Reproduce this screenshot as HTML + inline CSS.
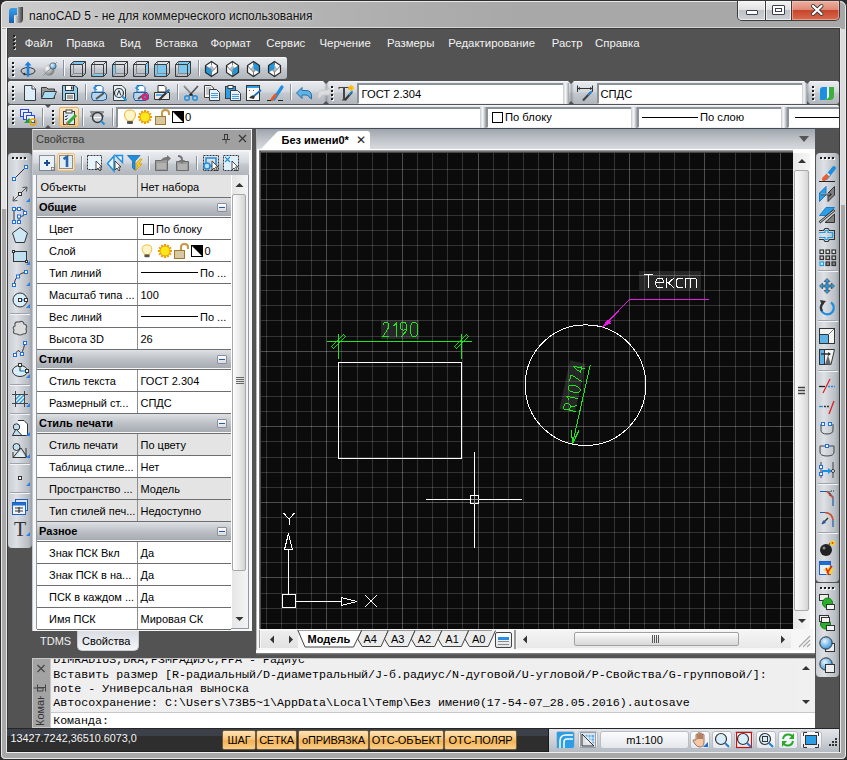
<!DOCTYPE html><html><head><meta charset="utf-8"><style>
html,body{margin:0;padding:0;width:847px;height:760px;overflow:hidden;background:#2a2a2a}
*{box-sizing:border-box}
</style></head><body>
<div style="position:absolute;left:0px;top:0px;width:847px;height:760px;background:#a8a8a8;border:1px solid #2e2e2e;border-radius:7px 7px 5px 5px"></div>
<div style="position:absolute;left:1px;top:1px;width:845px;height:758px;border:1px solid rgba(255,255,255,0.75);border-radius:6px 6px 4px 4px"></div>
<div style="position:absolute;left:2px;top:2px;width:843px;height:26px;background:linear-gradient(90deg,rgba(255,255,255,0.42) 0px,rgba(255,255,255,0.25) 150px,rgba(255,255,255,0.08) 380px,rgba(255,255,255,0) 520px)"></div>
<div style="position:absolute;left:2px;top:27px;width:838px;height:1px;background:rgba(255,255,255,0.5)"></div>
<div style="position:absolute;left:2px;top:29px;width:5px;height:180px;background:#e2e2e2"></div>
<div style="position:absolute;left:841px;top:29px;width:4px;height:176px;background:#dcdcdc"></div>
<div style="position:absolute;left:6px;top:28px;width:1px;height:725px;background:rgba(255,255,255,0.7)"></div>
<div style="position:absolute;left:840px;top:28px;width:1px;height:725px;background:rgba(255,255,255,0.7)"></div>
<div style="position:absolute;left:7px;top:752px;width:833px;height:1px;background:rgba(255,255,255,0.8)"></div>
<svg style="position:absolute;left:8px;top:6px" width="16" height="18"><defs><linearGradient id="tlb" x1="0" y1="0" x2="0" y2="1"><stop offset="0" stop-color="#3aa0e8"/><stop offset="1" stop-color="#1a5fb0"/></linearGradient><linearGradient id="tlg" x1="0" y1="0" x2="1" y2="0"><stop offset="0" stop-color="#f0f0f0"/><stop offset="1" stop-color="#3a3a3a"/></linearGradient></defs><path d="M1,5 Q1,2 4,2 H9 V9 H6 V17 H1 Z" fill="url(#tlb)"/><path d="M10,1 H15 V13 Q15,17 11,17 H6 V10 H10 Z" fill="url(#tlg)"/></svg>
<div style="position:absolute;left:29px;top:10px;font-family:'Liberation Sans',sans-serif;font-size:12px;color:#111;font-weight:normal;white-space:nowrap;line-height:1;text-shadow:0 0 6px rgba(255,255,255,0.55),0 0 3px rgba(255,255,255,0.4)">nanoCAD 5 - не для коммерческого использования</div>
<div style="position:absolute;left:737px;top:0px;width:103px;height:21px;background:#3c3c3c;border-radius:0 0 5px 5px"></div>
<div style="position:absolute;left:738px;top:1px;width:27px;height:19px;background:linear-gradient(180deg,#f4f4f4 0%,#e2e2e2 45%,#bfc3c8 50%,#cdd1d5 100%);border-radius:0 0 0 4px;box-shadow:inset 0 0 0 1px rgba(255,255,255,0.6)"></div>
<div style="position:absolute;left:766px;top:1px;width:25px;height:19px;background:linear-gradient(180deg,#f4f4f4 0%,#e2e2e2 45%,#bfc3c8 50%,#cdd1d5 100%);box-shadow:inset 0 0 0 1px rgba(255,255,255,0.6)"></div>
<div style="position:absolute;left:792px;top:1px;width:47px;height:19px;background:linear-gradient(180deg,#eeb0a0 0%,#de8c78 45%,#c8452c 50%,#d86a50 100%);border-radius:0 0 4px 0;box-shadow:inset 0 0 0 1px rgba(255,210,200,0.5)"></div>
<div style="position:absolute;left:746px;top:10px;width:12px;height:5px;background:#fff;border:1px solid #3a4050;border-radius:1px"></div>
<div style="position:absolute;left:772px;top:5px;width:13px;height:10px;background:#fff;border:1px solid #3a4050;border-radius:1px"></div>
<div style="position:absolute;left:775px;top:8px;width:7px;height:4px;background:#fff;border:1px solid #3a4050"></div>
<svg style="position:absolute;left:809px;top:3px" width="17" height="14"><path d="M4,3 L12.5,11 M12.5,3 L4,11" stroke="#3a3a3a" stroke-width="4" stroke-linecap="round"/><path d="M4,3 L12.5,11 M12.5,3 L4,11" stroke="#fff" stroke-width="2.3" stroke-linecap="round"/></svg>
<div style="position:absolute;left:7px;top:29px;width:832px;height:723px;background:#535353"></div>
<div style="position:absolute;left:7px;top:28px;width:833px;height:1px;background:#3a3a3a"></div>
<div style="position:absolute;left:7px;top:29px;width:1px;height:723px;background:#3a3a3a"></div>
<div style="position:absolute;left:839px;top:29px;width:1px;height:723px;background:#3a3a3a"></div>
<div style="position:absolute;left:14px;top:36px;width:2px;height:2px;background:#cfcfcf"></div><div style="position:absolute;left:13px;top:35px;width:2px;height:2px;background:#202020"></div><div style="position:absolute;left:14px;top:40px;width:2px;height:2px;background:#cfcfcf"></div><div style="position:absolute;left:13px;top:39px;width:2px;height:2px;background:#202020"></div><div style="position:absolute;left:14px;top:44px;width:2px;height:2px;background:#cfcfcf"></div><div style="position:absolute;left:13px;top:43px;width:2px;height:2px;background:#202020"></div><div style="position:absolute;left:14px;top:48px;width:2px;height:2px;background:#cfcfcf"></div><div style="position:absolute;left:13px;top:47px;width:2px;height:2px;background:#202020"></div>
<div style="position:absolute;left:24.7px;top:38px;font-family:'Liberation Sans',sans-serif;font-size:11.4px;color:#f2f2f2;font-weight:normal;white-space:nowrap;line-height:1;">Файл</div>
<div style="position:absolute;left:66.2px;top:38px;font-family:'Liberation Sans',sans-serif;font-size:11.4px;color:#f2f2f2;font-weight:normal;white-space:nowrap;line-height:1;">Правка</div>
<div style="position:absolute;left:120px;top:38px;font-family:'Liberation Sans',sans-serif;font-size:11.4px;color:#f2f2f2;font-weight:normal;white-space:nowrap;line-height:1;">Вид</div>
<div style="position:absolute;left:155.3px;top:38px;font-family:'Liberation Sans',sans-serif;font-size:11.4px;color:#f2f2f2;font-weight:normal;white-space:nowrap;line-height:1;">Вставка</div>
<div style="position:absolute;left:210.4px;top:38px;font-family:'Liberation Sans',sans-serif;font-size:11.4px;color:#f2f2f2;font-weight:normal;white-space:nowrap;line-height:1;">Формат</div>
<div style="position:absolute;left:266.2px;top:38px;font-family:'Liberation Sans',sans-serif;font-size:11.4px;color:#f2f2f2;font-weight:normal;white-space:nowrap;line-height:1;">Сервис</div>
<div style="position:absolute;left:319.5px;top:38px;font-family:'Liberation Sans',sans-serif;font-size:11.4px;color:#f2f2f2;font-weight:normal;white-space:nowrap;line-height:1;">Черчение</div>
<div style="position:absolute;left:387px;top:38px;font-family:'Liberation Sans',sans-serif;font-size:11.4px;color:#f2f2f2;font-weight:normal;white-space:nowrap;line-height:1;">Размеры</div>
<div style="position:absolute;left:448.3px;top:38px;font-family:'Liberation Sans',sans-serif;font-size:11.4px;color:#f2f2f2;font-weight:normal;white-space:nowrap;line-height:1;">Редактирование</div>
<div style="position:absolute;left:551.7px;top:38px;font-family:'Liberation Sans',sans-serif;font-size:11.4px;color:#f2f2f2;font-weight:normal;white-space:nowrap;line-height:1;">Растр</div>
<div style="position:absolute;left:595px;top:38px;font-family:'Liberation Sans',sans-serif;font-size:11.4px;color:#f2f2f2;font-weight:normal;white-space:nowrap;line-height:1;">Справка</div>
<div style="position:absolute;left:8px;top:57px;width:279px;height:22px;background:linear-gradient(180deg,#e9ecf0 0%,#d5d9de 45%,#c3c8ce 55%,#b1b6bd 100%);border-radius:3px;box-shadow:inset 0 1px 0 #f4f6f8"></div>
<div style="position:absolute;left:63px;top:60px;width:1px;height:16px;background:#8a9099"></div><div style="position:absolute;left:64px;top:60px;width:1px;height:16px;background:#fafafa"></div>
<div style="position:absolute;left:198px;top:60px;width:1px;height:16px;background:#8a9099"></div><div style="position:absolute;left:199px;top:60px;width:1px;height:16px;background:#fafafa"></div>
<div style="position:absolute;left:8px;top:81px;width:831px;height:23px;background:linear-gradient(180deg,#e9ecf0 0%,#d5d9de 45%,#c3c8ce 55%,#b1b6bd 100%);border-radius:3px;box-shadow:inset 0 1px 0 #f4f6f8"></div>
<div style="position:absolute;left:85px;top:84px;width:1px;height:16px;background:#8a9099"></div><div style="position:absolute;left:86px;top:84px;width:1px;height:16px;background:#fafafa"></div>
<div style="position:absolute;left:177px;top:84px;width:1px;height:16px;background:#8a9099"></div><div style="position:absolute;left:178px;top:84px;width:1px;height:16px;background:#fafafa"></div>
<div style="position:absolute;left:290px;top:84px;width:1px;height:16px;background:#8a9099"></div><div style="position:absolute;left:291px;top:84px;width:1px;height:16px;background:#fafafa"></div>
<div style="position:absolute;left:324px;top:81px;width:5px;height:23px;background:linear-gradient(90deg,rgba(0,0,0,0.0),rgba(90,96,104,0.35) 50%,rgba(255,255,255,0.0))"></div>
<svg style="position:absolute;left:323px;top:81px" width="6" height="23"><path d="M0,0 H6 L3,3 Z M0,23 H6 L3,20 Z" fill="#535353"/></svg>
<div style="position:absolute;left:569px;top:81px;width:5px;height:23px;background:linear-gradient(90deg,rgba(0,0,0,0.0),rgba(90,96,104,0.35) 50%,rgba(255,255,255,0.0))"></div>
<svg style="position:absolute;left:568px;top:81px" width="6" height="23"><path d="M0,0 H6 L3,3 Z M0,23 H6 L3,20 Z" fill="#535353"/></svg>
<div style="position:absolute;left:805px;top:81px;width:5px;height:23px;background:linear-gradient(90deg,rgba(0,0,0,0.0),rgba(90,96,104,0.35) 50%,rgba(255,255,255,0.0))"></div>
<svg style="position:absolute;left:804px;top:81px" width="6" height="23"><path d="M0,0 H6 L3,3 Z M0,23 H6 L3,20 Z" fill="#535353"/></svg>
<div style="position:absolute;left:357px;top:83px;width:206px;height:21px;background:#fff;border-top:2px solid #8d9298;border-left:2px solid #8d9298;border-bottom:1px solid #f2f2f2"></div>
<div style="position:absolute;left:563px;top:83px;width:6px;height:21px;background:linear-gradient(90deg,#c4c8ce,#f7f7f7 40%,#dfe2e6 60%,#9aa0a8)"></div>
<div style="position:absolute;left:361.5px;top:89px;font-family:'Liberation Sans',sans-serif;font-size:11.2px;color:#000;font-weight:normal;white-space:nowrap;line-height:1;">ГОСТ 2.304</div>
<div style="position:absolute;left:597px;top:83px;width:206px;height:21px;background:#fff;border-top:2px solid #8d9298;border-left:2px solid #8d9298;border-bottom:1px solid #f2f2f2"></div>
<div style="position:absolute;left:802px;top:83px;width:5px;height:21px;background:linear-gradient(90deg,#c4c8ce,#f7f7f7 40%,#dfe2e6 60%,#9aa0a8)"></div>
<div style="position:absolute;left:600.5px;top:89px;font-family:'Liberation Sans',sans-serif;font-size:11.2px;color:#000;font-weight:normal;white-space:nowrap;line-height:1;">СПДС</div>
<div style="position:absolute;left:8px;top:105px;width:831px;height:24px;background:linear-gradient(180deg,#e9ecf0 0%,#d5d9de 45%,#c3c8ce 55%,#b1b6bd 100%);border-radius:3px;box-shadow:inset 0 1px 0 #f4f6f8"></div>
<div style="position:absolute;left:8px;top:128px;width:831px;height:1px;background:#464c56"></div>
<svg style="position:absolute;left:45px;top:105px" width="6" height="23"><path d="M0,0 H6 L3,3 Z M0,23 H6 L3,20 Z" fill="#535353"/></svg>
<div style="position:absolute;left:112px;top:108px;width:1px;height:18px;background:#8a9099"></div><div style="position:absolute;left:113px;top:108px;width:1px;height:18px;background:#fafafa"></div>
<div style="position:absolute;left:116px;top:107px;width:364px;height:21px;background:#fff;border-top:2px solid #8d9298;border-left:2px solid #8d9298;border-bottom:1px solid #f2f2f2"></div>
<div style="position:absolute;left:480px;top:107px;width:6px;height:21px;background:linear-gradient(90deg,#c4c8ce,#f7f7f7 40%,#dfe2e6 60%,#9aa0a8)"></div>
<div style="position:absolute;left:486px;top:107px;width:145px;height:21px;background:#fff;border-top:2px solid #8d9298;border-left:2px solid #8d9298;border-bottom:1px solid #f2f2f2"></div>
<div style="position:absolute;left:631px;top:107px;width:6px;height:21px;background:linear-gradient(90deg,#c4c8ce,#f7f7f7 40%,#dfe2e6 60%,#9aa0a8)"></div>
<div style="position:absolute;left:637px;top:107px;width:144px;height:21px;background:#fff;border-top:2px solid #8d9298;border-left:2px solid #8d9298;border-bottom:1px solid #f2f2f2"></div>
<div style="position:absolute;left:781px;top:107px;width:6px;height:21px;background:linear-gradient(90deg,#c4c8ce,#f7f7f7 40%,#dfe2e6 60%,#9aa0a8)"></div>
<div style="position:absolute;left:787px;top:107px;width:52px;height:21px;background:#fff;border-top:2px solid #8d9298;border-left:2px solid #8d9298;border-bottom:1px solid #f2f2f2"></div>
<div style="position:absolute;left:185px;top:112px;font-family:'Liberation Sans',sans-serif;font-size:11.2px;color:#000;font-weight:normal;white-space:nowrap;line-height:1;">0</div>
<div style="position:absolute;left:492px;top:112px;width:11px;height:11px;border:1px solid #000"></div>
<div style="position:absolute;left:505px;top:112px;font-family:'Liberation Sans',sans-serif;font-size:11.2px;color:#000;font-weight:normal;white-space:nowrap;line-height:1;">По блоку</div>
<div style="position:absolute;left:642px;top:117px;width:56px;height:1px;background:#000"></div>
<div style="position:absolute;left:700px;top:112px;font-family:'Liberation Sans',sans-serif;font-size:11.2px;color:#000;font-weight:normal;white-space:nowrap;line-height:1;">По слою</div>
<div style="position:absolute;left:795px;top:117px;width:44px;height:1px;background:#000"></div>
<div style="position:absolute;left:32px;top:129px;width:220px;height:502px;background:#f8f8f8;border-left:1px solid #c4c8ce"></div>
<div style="position:absolute;left:33px;top:130px;width:218px;height:20px;background:#9fa09f"></div>
<div style="position:absolute;left:36px;top:134px;font-family:'Liberation Sans',sans-serif;font-size:11px;color:#3a3a3a;font-weight:normal;white-space:nowrap;line-height:1;">Свойства</div>
<svg style="position:absolute;left:221px;top:134px" width="26" height="10"><path d="M3.5,0.5 V5.5 M6.5,0.5 V5.5 M1,5.5 H9 M5,5.5 V9.5 M3,0.5 H7" stroke="#3a3a3a" fill="none"/><path d="M18,1 L25,8 M25,1 L18,8" stroke="#3a3a3a" stroke-width="1.3"/></svg>
<div style="position:absolute;left:33px;top:150px;width:218px;height:2px;background:#f4f4f4"></div>
<div style="position:absolute;left:33px;top:152px;width:216px;height:23px;background:linear-gradient(180deg,#e9ecf0 0%,#d5d9de 45%,#c3c8ce 55%,#b1b6bd 100%)"></div>
<div style="position:absolute;left:36px;top:175px;width:213px;height:454px;background:#fff;border:1px solid #8e98a6;border-top:none"></div>
<div style="position:absolute;left:37px;top:175px;width:194px;height:22px;background:#e4e4e4"></div>
<div style="position:absolute;left:137px;top:175px;width:1px;height:22px;background:#8e8e8e"></div>
<div style="position:absolute;left:37px;top:197px;width:194px;height:1px;background:#6e6e6e"></div>
<div style="position:absolute;left:40.5px;top:181.5px;font-family:'Liberation Sans',sans-serif;font-size:11px;color:#000;font-weight:normal;white-space:nowrap;line-height:1;">Объекты</div>
<div style="position:absolute;left:140.5px;top:181.5px;font-family:'Liberation Sans',sans-serif;font-size:11px;color:#000;font-weight:normal;white-space:nowrap;line-height:1;">Нет набора</div>
<div style="position:absolute;left:37px;top:198px;width:194px;height:18px;background:linear-gradient(180deg,#dde0e4,#b9bdc3 60%,#a6abb2)"></div>
<div style="position:absolute;left:37px;top:216px;width:194px;height:1px;background:#f8f8f8"></div>
<div style="position:absolute;left:37px;top:217px;width:194px;height:1px;background:#6e6e6e"></div>
<div style="position:absolute;left:39px;top:202px;font-family:'Liberation Sans',sans-serif;font-size:11px;color:#000;font-weight:bold;white-space:nowrap;line-height:1;">Общие</div>
<div style="position:absolute;left:217px;top:203px;width:10px;height:9px;background:linear-gradient(#fdfdfd,#d8dade);border:1px solid #8c9198;border-radius:1px"></div>
<div style="position:absolute;left:219px;top:207px;width:6px;height:1px;background:#2a5aa8"></div>
<div style="position:absolute;left:37px;top:218px;width:194px;height:21px;background:#ffffff"></div>
<div style="position:absolute;left:137px;top:218px;width:1px;height:21px;background:#8e8e8e"></div>
<div style="position:absolute;left:37px;top:239px;width:194px;height:1px;background:#6e6e6e"></div>
<div style="position:absolute;left:49px;top:223.5px;font-family:'Liberation Sans',sans-serif;font-size:11px;color:#000;font-weight:normal;white-space:nowrap;line-height:1;">Цвет</div>
<div style="position:absolute;left:37px;top:240px;width:194px;height:21px;background:#ffffff"></div>
<div style="position:absolute;left:137px;top:240px;width:1px;height:21px;background:#8e8e8e"></div>
<div style="position:absolute;left:37px;top:261px;width:194px;height:1px;background:#6e6e6e"></div>
<div style="position:absolute;left:49px;top:245.5px;font-family:'Liberation Sans',sans-serif;font-size:11px;color:#000;font-weight:normal;white-space:nowrap;line-height:1;">Слой</div>
<div style="position:absolute;left:37px;top:262px;width:194px;height:21px;background:#ffffff"></div>
<div style="position:absolute;left:137px;top:262px;width:1px;height:21px;background:#8e8e8e"></div>
<div style="position:absolute;left:37px;top:283px;width:194px;height:1px;background:#6e6e6e"></div>
<div style="position:absolute;left:49px;top:267.5px;font-family:'Liberation Sans',sans-serif;font-size:11px;color:#000;font-weight:normal;white-space:nowrap;line-height:1;">Тип линий</div>
<div style="position:absolute;left:37px;top:284px;width:194px;height:21px;background:#ffffff"></div>
<div style="position:absolute;left:137px;top:284px;width:1px;height:21px;background:#8e8e8e"></div>
<div style="position:absolute;left:37px;top:305px;width:194px;height:1px;background:#6e6e6e"></div>
<div style="position:absolute;left:49px;top:289.5px;font-family:'Liberation Sans',sans-serif;font-size:11px;color:#000;font-weight:normal;white-space:nowrap;line-height:1;">Масштаб типа ...</div>
<div style="position:absolute;left:140.5px;top:289.5px;font-family:'Liberation Sans',sans-serif;font-size:11px;color:#000;font-weight:normal;white-space:nowrap;line-height:1;">100</div>
<div style="position:absolute;left:37px;top:306px;width:194px;height:21px;background:#ffffff"></div>
<div style="position:absolute;left:137px;top:306px;width:1px;height:21px;background:#8e8e8e"></div>
<div style="position:absolute;left:37px;top:327px;width:194px;height:1px;background:#6e6e6e"></div>
<div style="position:absolute;left:49px;top:311.5px;font-family:'Liberation Sans',sans-serif;font-size:11px;color:#000;font-weight:normal;white-space:nowrap;line-height:1;">Вес линий</div>
<div style="position:absolute;left:37px;top:328px;width:194px;height:21px;background:#ffffff"></div>
<div style="position:absolute;left:137px;top:328px;width:1px;height:21px;background:#8e8e8e"></div>
<div style="position:absolute;left:37px;top:349px;width:194px;height:1px;background:#6e6e6e"></div>
<div style="position:absolute;left:49px;top:333.5px;font-family:'Liberation Sans',sans-serif;font-size:11px;color:#000;font-weight:normal;white-space:nowrap;line-height:1;">Высота 3D</div>
<div style="position:absolute;left:140.5px;top:333.5px;font-family:'Liberation Sans',sans-serif;font-size:11px;color:#000;font-weight:normal;white-space:nowrap;line-height:1;">26</div>
<div style="position:absolute;left:37px;top:350px;width:194px;height:18px;background:linear-gradient(180deg,#dde0e4,#b9bdc3 60%,#a6abb2)"></div>
<div style="position:absolute;left:37px;top:368px;width:194px;height:1px;background:#f8f8f8"></div>
<div style="position:absolute;left:37px;top:369px;width:194px;height:1px;background:#6e6e6e"></div>
<div style="position:absolute;left:39px;top:354px;font-family:'Liberation Sans',sans-serif;font-size:11px;color:#000;font-weight:bold;white-space:nowrap;line-height:1;">Стили</div>
<div style="position:absolute;left:217px;top:355px;width:10px;height:9px;background:linear-gradient(#fdfdfd,#d8dade);border:1px solid #8c9198;border-radius:1px"></div>
<div style="position:absolute;left:219px;top:359px;width:6px;height:1px;background:#2a5aa8"></div>
<div style="position:absolute;left:37px;top:370px;width:194px;height:21px;background:#ffffff"></div>
<div style="position:absolute;left:137px;top:370px;width:1px;height:21px;background:#8e8e8e"></div>
<div style="position:absolute;left:37px;top:391px;width:194px;height:1px;background:#6e6e6e"></div>
<div style="position:absolute;left:49px;top:375.5px;font-family:'Liberation Sans',sans-serif;font-size:11px;color:#000;font-weight:normal;white-space:nowrap;line-height:1;">Стиль текста</div>
<div style="position:absolute;left:140.5px;top:375.5px;font-family:'Liberation Sans',sans-serif;font-size:11px;color:#000;font-weight:normal;white-space:nowrap;line-height:1;">ГОСТ 2.304</div>
<div style="position:absolute;left:37px;top:392px;width:194px;height:21px;background:#ffffff"></div>
<div style="position:absolute;left:137px;top:392px;width:1px;height:21px;background:#8e8e8e"></div>
<div style="position:absolute;left:37px;top:413px;width:194px;height:1px;background:#6e6e6e"></div>
<div style="position:absolute;left:49px;top:397.5px;font-family:'Liberation Sans',sans-serif;font-size:11px;color:#000;font-weight:normal;white-space:nowrap;line-height:1;">Размерный ст...</div>
<div style="position:absolute;left:140.5px;top:397.5px;font-family:'Liberation Sans',sans-serif;font-size:11px;color:#000;font-weight:normal;white-space:nowrap;line-height:1;">СПДС</div>
<div style="position:absolute;left:37px;top:414px;width:194px;height:18px;background:linear-gradient(180deg,#dde0e4,#b9bdc3 60%,#a6abb2)"></div>
<div style="position:absolute;left:37px;top:432px;width:194px;height:1px;background:#f8f8f8"></div>
<div style="position:absolute;left:37px;top:433px;width:194px;height:1px;background:#6e6e6e"></div>
<div style="position:absolute;left:39px;top:418px;font-family:'Liberation Sans',sans-serif;font-size:11px;color:#000;font-weight:bold;white-space:nowrap;line-height:1;">Стиль печати</div>
<div style="position:absolute;left:217px;top:419px;width:10px;height:9px;background:linear-gradient(#fdfdfd,#d8dade);border:1px solid #8c9198;border-radius:1px"></div>
<div style="position:absolute;left:219px;top:423px;width:6px;height:1px;background:#2a5aa8"></div>
<div style="position:absolute;left:37px;top:434px;width:194px;height:21px;background:#e4e4e4"></div>
<div style="position:absolute;left:137px;top:434px;width:1px;height:21px;background:#8e8e8e"></div>
<div style="position:absolute;left:37px;top:455px;width:194px;height:1px;background:#6e6e6e"></div>
<div style="position:absolute;left:49px;top:439.5px;font-family:'Liberation Sans',sans-serif;font-size:11px;color:#000;font-weight:normal;white-space:nowrap;line-height:1;">Стиль печати</div>
<div style="position:absolute;left:140.5px;top:439.5px;font-family:'Liberation Sans',sans-serif;font-size:11px;color:#000;font-weight:normal;white-space:nowrap;line-height:1;">По цвету</div>
<div style="position:absolute;left:37px;top:456px;width:194px;height:21px;background:#ffffff"></div>
<div style="position:absolute;left:137px;top:456px;width:1px;height:21px;background:#8e8e8e"></div>
<div style="position:absolute;left:37px;top:477px;width:194px;height:1px;background:#6e6e6e"></div>
<div style="position:absolute;left:49px;top:461.5px;font-family:'Liberation Sans',sans-serif;font-size:11px;color:#000;font-weight:normal;white-space:nowrap;line-height:1;">Таблица стиле...</div>
<div style="position:absolute;left:140.5px;top:461.5px;font-family:'Liberation Sans',sans-serif;font-size:11px;color:#000;font-weight:normal;white-space:nowrap;line-height:1;">Нет</div>
<div style="position:absolute;left:37px;top:478px;width:194px;height:21px;background:#e4e4e4"></div>
<div style="position:absolute;left:137px;top:478px;width:1px;height:21px;background:#8e8e8e"></div>
<div style="position:absolute;left:37px;top:499px;width:194px;height:1px;background:#6e6e6e"></div>
<div style="position:absolute;left:49px;top:483.5px;font-family:'Liberation Sans',sans-serif;font-size:11px;color:#000;font-weight:normal;white-space:nowrap;line-height:1;">Пространство ...</div>
<div style="position:absolute;left:140.5px;top:483.5px;font-family:'Liberation Sans',sans-serif;font-size:11px;color:#000;font-weight:normal;white-space:nowrap;line-height:1;">Модель</div>
<div style="position:absolute;left:37px;top:500px;width:194px;height:21px;background:#e4e4e4"></div>
<div style="position:absolute;left:137px;top:500px;width:1px;height:21px;background:#8e8e8e"></div>
<div style="position:absolute;left:37px;top:521px;width:194px;height:1px;background:#6e6e6e"></div>
<div style="position:absolute;left:49px;top:505.5px;font-family:'Liberation Sans',sans-serif;font-size:11px;color:#000;font-weight:normal;white-space:nowrap;line-height:1;">Тип стилей печ...</div>
<div style="position:absolute;left:140.5px;top:505.5px;font-family:'Liberation Sans',sans-serif;font-size:11px;color:#000;font-weight:normal;white-space:nowrap;line-height:1;">Недоступно</div>
<div style="position:absolute;left:37px;top:522px;width:194px;height:18px;background:linear-gradient(180deg,#dde0e4,#b9bdc3 60%,#a6abb2)"></div>
<div style="position:absolute;left:37px;top:540px;width:194px;height:1px;background:#f8f8f8"></div>
<div style="position:absolute;left:37px;top:541px;width:194px;height:1px;background:#6e6e6e"></div>
<div style="position:absolute;left:39px;top:526px;font-family:'Liberation Sans',sans-serif;font-size:11px;color:#000;font-weight:bold;white-space:nowrap;line-height:1;">Разное</div>
<div style="position:absolute;left:217px;top:527px;width:10px;height:9px;background:linear-gradient(#fdfdfd,#d8dade);border:1px solid #8c9198;border-radius:1px"></div>
<div style="position:absolute;left:219px;top:531px;width:6px;height:1px;background:#2a5aa8"></div>
<div style="position:absolute;left:37px;top:542px;width:194px;height:21px;background:#ffffff"></div>
<div style="position:absolute;left:137px;top:542px;width:1px;height:21px;background:#8e8e8e"></div>
<div style="position:absolute;left:37px;top:563px;width:194px;height:1px;background:#6e6e6e"></div>
<div style="position:absolute;left:49px;top:547.5px;font-family:'Liberation Sans',sans-serif;font-size:11px;color:#000;font-weight:normal;white-space:nowrap;line-height:1;">Знак ПСК Вкл</div>
<div style="position:absolute;left:140.5px;top:547.5px;font-family:'Liberation Sans',sans-serif;font-size:11px;color:#000;font-weight:normal;white-space:nowrap;line-height:1;">Да</div>
<div style="position:absolute;left:37px;top:564px;width:194px;height:21px;background:#ffffff"></div>
<div style="position:absolute;left:137px;top:564px;width:1px;height:21px;background:#8e8e8e"></div>
<div style="position:absolute;left:37px;top:585px;width:194px;height:1px;background:#6e6e6e"></div>
<div style="position:absolute;left:49px;top:569.5px;font-family:'Liberation Sans',sans-serif;font-size:11px;color:#000;font-weight:normal;white-space:nowrap;line-height:1;">Знак ПСК в на...</div>
<div style="position:absolute;left:140.5px;top:569.5px;font-family:'Liberation Sans',sans-serif;font-size:11px;color:#000;font-weight:normal;white-space:nowrap;line-height:1;">Да</div>
<div style="position:absolute;left:37px;top:586px;width:194px;height:21px;background:#ffffff"></div>
<div style="position:absolute;left:137px;top:586px;width:1px;height:21px;background:#8e8e8e"></div>
<div style="position:absolute;left:37px;top:607px;width:194px;height:1px;background:#6e6e6e"></div>
<div style="position:absolute;left:49px;top:591.5px;font-family:'Liberation Sans',sans-serif;font-size:11px;color:#000;font-weight:normal;white-space:nowrap;line-height:1;">ПСК в каждом ...</div>
<div style="position:absolute;left:140.5px;top:591.5px;font-family:'Liberation Sans',sans-serif;font-size:11px;color:#000;font-weight:normal;white-space:nowrap;line-height:1;">Да</div>
<div style="position:absolute;left:37px;top:608px;width:194px;height:21px;background:#ffffff"></div>
<div style="position:absolute;left:137px;top:608px;width:1px;height:21px;background:#8e8e8e"></div>
<div style="position:absolute;left:37px;top:629px;width:194px;height:1px;background:#6e6e6e"></div>
<div style="position:absolute;left:49px;top:613.5px;font-family:'Liberation Sans',sans-serif;font-size:11px;color:#000;font-weight:normal;white-space:nowrap;line-height:1;">Имя ПСК</div>
<div style="position:absolute;left:140.5px;top:613.5px;font-family:'Liberation Sans',sans-serif;font-size:11px;color:#000;font-weight:normal;white-space:nowrap;line-height:1;">Мировая СК</div>
<div style="position:absolute;left:143px;top:224px;width:11px;height:11px;border:1px solid #000;background:#fff"></div>
<div style="position:absolute;left:156px;top:223.5px;font-family:'Liberation Sans',sans-serif;font-size:11px;color:#000;font-weight:normal;white-space:nowrap;line-height:1;">По блоку</div>
<svg style="position:absolute;left:140px;top:243px;overflow:visible" width="14" height="16" viewBox="0 0 16 16"><path d="M8,1 Q13.5,1 13.5,6 Q13.5,9 11,11 V12 H5 V11 Q2.5,9 2.5,6 Q2.5,1 8,1 Z" fill="#fff6c8" stroke="#f0b030"/><rect x="5" y="12" width="6" height="3" rx="1" fill="#555"/></svg>
<svg style="position:absolute;left:157px;top:243px;overflow:visible" width="16" height="16" viewBox="0 0 16 16"><g stroke="#f09a00" stroke-width="2"><path d="M8,8 L15.00,8.00"/><path d="M8,8 L14.06,11.50"/><path d="M8,8 L11.50,14.06"/><path d="M8,8 L8.00,15.00"/><path d="M8,8 L4.50,14.06"/><path d="M8,8 L1.94,11.50"/><path d="M8,8 L1.00,8.00"/><path d="M8,8 L1.94,4.50"/><path d="M8,8 L4.50,1.94"/><path d="M8,8 L8.00,1.00"/><path d="M8,8 L11.50,1.94"/><path d="M8,8 L14.06,4.50"/></g><circle cx="8" cy="8" r="5" fill="#ffe81a" stroke="#f0a000"/></svg>
<svg style="position:absolute;left:174px;top:243px;overflow:visible" width="16" height="16" viewBox="0 0 16 16"><path d="M7,8 V4 Q7,1 10.5,1 Q14,1 14,4 V6" fill="none" stroke="#c89a40" stroke-width="2"/><rect x="0.5" y="7.5" width="10" height="8" fill="#d8c8a0" stroke="#a07830"/></svg>
<svg style="position:absolute;left:191px;top:244px;overflow:visible" width="12" height="14" viewBox="0 0 12 14"><rect x="0.5" y="1.5" width="11" height="11" fill="#fff" stroke="#000"/><path d="M0.5,1.5 H11.5 V12.5 Z" fill="#000"/></svg>
<div style="position:absolute;left:204.5px;top:245.5px;font-family:'Liberation Sans',sans-serif;font-size:11px;color:#000;font-weight:normal;white-space:nowrap;line-height:1;">0</div>
<div style="position:absolute;left:141px;top:272px;width:57px;height:1px;background:#000"></div>
<div style="position:absolute;left:200px;top:267.5px;font-family:'Liberation Sans',sans-serif;font-size:11px;color:#000;font-weight:normal;white-space:nowrap;line-height:1;">По ...</div>
<div style="position:absolute;left:141px;top:316px;width:57px;height:1px;background:#000"></div>
<div style="position:absolute;left:200px;top:311.5px;font-family:'Liberation Sans',sans-serif;font-size:11px;color:#000;font-weight:normal;white-space:nowrap;line-height:1;">По ...</div>
<div style="position:absolute;left:231px;top:175px;width:17px;height:453px;background:linear-gradient(90deg,#e6e6e6,#f4f4f4);border-left:1px solid #fff"></div>
<div style="position:absolute;left:232px;top:194px;width:14px;height:377px;background:linear-gradient(90deg,#fdfdfd,#e6e6e6 60%,#d2d2d2);border:1px solid #a8a8a8;border-radius:2px"></div>
<svg style="position:absolute;left:235px;top:182px" width="9" height="6"><path d="M0.5,5 H8.5 L4.5,1 Z" fill="#333"/></svg>
<svg style="position:absolute;left:235px;top:616px" width="9" height="6"><path d="M0.5,1 H8.5 L4.5,5 Z" fill="#333"/></svg>
<svg style="position:absolute;left:236px;top:377px" width="8" height="8"><path d="M0,0.5 H8 M0,2.5 H8 M0,4.5 H8 M0,6.5 H8" stroke="#666"/></svg>
<div style="position:absolute;left:40px;top:636px;font-family:'Liberation Sans',sans-serif;font-size:11px;color:#f0f0f0;font-weight:normal;white-space:nowrap;line-height:1;">TDMS</div>
<div style="position:absolute;left:77px;top:631px;width:62px;height:20px;background:linear-gradient(180deg,#d9dde2,#f4f5f7);border:1px solid #c8ccd2;border-top:none;border-radius:0 0 5px 5px"></div>
<div style="position:absolute;left:82px;top:636px;font-family:'Liberation Sans',sans-serif;font-size:11px;color:#000;font-weight:normal;white-space:nowrap;line-height:1;">Свойства</div>
<div style="position:absolute;left:8px;top:153px;width:24px;height:395px;background:linear-gradient(90deg,#c9ced4 0%,#dde0e4 35%,#b8bdc4 85%,#9aa0a8 100%);border-radius:4px 4px 4px 4px"></div>
<div style="position:absolute;left:816px;top:153px;width:23px;height:429px;background:linear-gradient(90deg,#c9ced4 0%,#dde0e4 35%,#b8bdc4 85%,#9aa0a8 100%);border-radius:4px"></div>
<div style="position:absolute;left:816px;top:583px;width:23px;height:94px;background:linear-gradient(90deg,#c9ced4 0%,#dde0e4 35%,#b8bdc4 85%,#9aa0a8 100%);border-radius:0 0 4px 4px"></div>
<div style="position:absolute;left:256px;top:129px;width:559px;height:523px;background:#fff;border-left:1px solid #b8b8b8"></div>
<div style="position:absolute;left:257px;top:129px;width:558px;height:20px;background:linear-gradient(180deg,#9fa5ad,#c4c8cd 60%,#d6d9dd 100%)"></div>
<svg style="position:absolute;left:257px;top:129px" width="120" height="22"><path d="M3,21 L20,3 Q21,2 23,2 L110,2 Q113,2 113,5 L113,21 Z" fill="#fff"/></svg>
<div style="position:absolute;left:281.5px;top:135px;font-family:'Liberation Sans',sans-serif;font-size:11px;color:#000;font-weight:bold;white-space:nowrap;line-height:1;">Без имени0*</div>
<div style="position:absolute;left:356px;top:134px;font-family:'Liberation Sans',sans-serif;font-size:12px;color:#222;font-weight:normal;white-space:nowrap;line-height:1;">✕</div>
<svg style="position:absolute;left:798px;top:135px" width="12" height="8"><path d="M1,1 L11,1 L6,7 Z" fill="#555"/></svg>
<svg style="position:absolute;left:261px;top:153px" width="532" height="476" viewBox="261 153 532 476"><rect x="261" y="153" width="532" height="476" fill="#0b0b0b"/><rect x="381" y="320" width="38" height="19" fill="#262626"/><rect x="639" y="271" width="62" height="19" fill="#262626"/><g transform="translate(575,412.5) rotate(-77.6)"><rect x="0" y="-16" width="50" height="16" fill="#262626"/></g><g fill="#fff" fill-opacity="0.165" shape-rendering="crispEdges"><rect x="266" y="153" width="1" height="476"/><rect x="281" y="153" width="1" height="476"/><rect x="296" y="153" width="1" height="476"/><rect x="311" y="153" width="1" height="476"/><rect x="341" y="153" width="1" height="476"/><rect x="357" y="153" width="1" height="476"/><rect x="372" y="153" width="1" height="476"/><rect x="387" y="153" width="1" height="476"/><rect x="417" y="153" width="1" height="476"/><rect x="432" y="153" width="1" height="476"/><rect x="447" y="153" width="1" height="476"/><rect x="462" y="153" width="1" height="476"/><rect x="493" y="153" width="1" height="476"/><rect x="508" y="153" width="1" height="476"/><rect x="523" y="153" width="1" height="476"/><rect x="538" y="153" width="1" height="476"/><rect x="568" y="153" width="1" height="476"/><rect x="583" y="153" width="1" height="476"/><rect x="599" y="153" width="1" height="476"/><rect x="614" y="153" width="1" height="476"/><rect x="644" y="153" width="1" height="476"/><rect x="659" y="153" width="1" height="476"/><rect x="674" y="153" width="1" height="476"/><rect x="689" y="153" width="1" height="476"/><rect x="719" y="153" width="1" height="476"/><rect x="735" y="153" width="1" height="476"/><rect x="750" y="153" width="1" height="476"/><rect x="765" y="153" width="1" height="476"/><rect x="261" y="169" width="532" height="1"/><rect x="261" y="184" width="532" height="1"/><rect x="261" y="215" width="532" height="1"/><rect x="261" y="230" width="532" height="1"/><rect x="261" y="245" width="532" height="1"/><rect x="261" y="260" width="532" height="1"/><rect x="261" y="290" width="532" height="1"/><rect x="261" y="305" width="532" height="1"/><rect x="261" y="320" width="532" height="1"/><rect x="261" y="336" width="532" height="1"/><rect x="261" y="366" width="532" height="1"/><rect x="261" y="381" width="532" height="1"/><rect x="261" y="396" width="532" height="1"/><rect x="261" y="411" width="532" height="1"/><rect x="261" y="441" width="532" height="1"/><rect x="261" y="457" width="532" height="1"/><rect x="261" y="472" width="532" height="1"/><rect x="261" y="487" width="532" height="1"/><rect x="261" y="517" width="532" height="1"/><rect x="261" y="532" width="532" height="1"/><rect x="261" y="547" width="532" height="1"/><rect x="261" y="562" width="532" height="1"/><rect x="261" y="593" width="532" height="1"/><rect x="261" y="608" width="532" height="1"/><rect x="261" y="623" width="532" height="1"/></g><g fill="#fff" fill-opacity="0.27" shape-rendering="crispEdges"><rect x="326" y="153" width="1" height="476"/><rect x="402" y="153" width="1" height="476"/><rect x="478" y="153" width="1" height="476"/><rect x="553" y="153" width="1" height="476"/><rect x="629" y="153" width="1" height="476"/><rect x="704" y="153" width="1" height="476"/><rect x="780" y="153" width="1" height="476"/><rect x="261" y="199" width="532" height="1"/><rect x="261" y="275" width="532" height="1"/><rect x="261" y="351" width="532" height="1"/><rect x="261" y="426" width="532" height="1"/><rect x="261" y="502" width="532" height="1"/><rect x="261" y="577" width="532" height="1"/></g><g shape-rendering="crispEdges"><rect x="338.5" y="362.5" width="123" height="96" fill="none" stroke="#fff" stroke-width="1"/><g stroke="#1ee81e" fill="none" stroke-width="1"><path d="M327,341.5 H472 M338.5,334 V359 M461.5,334 V359"/><g transform="translate(338.5,341.5) rotate(-45)"><rect x="-8.8" y="-1.3" width="17.6" height="2.6" stroke-width="0.9"/></g><g transform="translate(461.5,341.5) rotate(-45)"><rect x="-8.8" y="-1.3" width="17.6" height="2.6" stroke-width="0.9"/></g><g transform="translate(382.6,336.8)"><path transform="translate(0.00,0)" d="M0.3,-11.3 Q0.9,-14.5 3.4,-14.5 Q6.3,-14.5 6.3,-11.3 Q6.3,-9.3 5,-7.5 L0,0 L6.3,0"/><path transform="translate(10.50,0)" d="M0.3,-10.5 L3.6,-14.5 V0"/><path transform="translate(17.50,0)" d="M6.6,-10.3 Q6.6,-14.5 3.3,-14.5 Q0,-14.5 0,-10.6 Q0,-6.7 3.2,-6.7 Q6.6,-6.7 6.6,-10.3 Q6.6,-7.5 5.8,-5.5 L1.2,0"/><path transform="translate(27.70,0)" d="M3.9,-14.5 Q7.7,-14.5 7.7,-7.25 Q7.7,0 3.9,0 Q0,0 0,-7.25 Q0,-14.5 3.9,-14.5 Z"/></g><path d="M590.3,364.5 L572.6,443.6 M571.3,430 L572.6,443.6 M578.9,430.6 L572.6,443.6"/><g transform="translate(575.6,411.5) rotate(-77.6) scale(0.86)" stroke-width="1.16"><path transform="translate(0.00,0)" d="M0,0 V-14.5 H4 Q7.3,-14.5 7.3,-10.8 Q7.3,-7.2 4,-7.2 H0 M3.6,-7.2 L7.3,0"/><path transform="translate(11.50,0)" d="M0.3,-10.5 L3.6,-14.5 V0"/><path transform="translate(21.30,0)" d="M3.9,-14.5 Q7.7,-14.5 7.7,-7.25 Q7.7,0 3.9,0 Q0,0 0,-7.25 Q0,-14.5 3.9,-14.5 Z"/><path transform="translate(33.60,0)" d="M0,-14.5 H7 L1.8,0"/><path transform="translate(45.40,0)" d="M5.4,0 V-14.5 L0,-4.2 H7.4"/></g></g><circle cx="585.5" cy="385.2" r="60.3" fill="none" stroke="#fff" stroke-width="1"/><polyline points="602,327.5 629.7,299.5 708.7,299.5" fill="none" stroke="#e61ae6"/><polygon points="603,326.5 607,320 610.5,323.5" fill="#e61ae6"/><circle cx="609" cy="321.5" r="1.8" fill="#e61ae6"/><g transform="translate(644.2,287.5)" stroke="#fff" fill="none"><path transform="translate(0.00,0)" d="M0,-13.4 H9 M4.5,-13.4 V0"/><path transform="translate(11.50,0)" d="M0.3,-4.6 H7.5 V-6.3 Q7.5,-9.3 3.9,-9.3 Q0.2,-9.3 0.2,-5.8 V-3 Q0.2,0 3.6,0 H7.3"/><path transform="translate(22.30,0)" d="M0,-9.3 V0 M0,-4.6 H1.8 L7.2,-9.3 M1.8,-4.6 L7.2,0"/><path transform="translate(32.30,0)" d="M6.2,-9.3 H3 Q0,-9.3 0,-6.3 V-3 Q0,0 3,0 H6.2"/><path transform="translate(40.80,0)" d="M0,0 V-9.3 H8.5 Q11.8,-9.3 11.8,-6.3 V0 M5.9,-9.3 V0"/></g><g stroke="#fff" fill="none"><path d="M426,499.5 H470.5 M478.5,499.5 H522 M474.5,452 V495.5 M474.5,503.5 V548"/><rect x="470.5" y="495.5" width="8" height="8"/><path d="M470.5,499.5 H478.5 M474.5,495.5 V503.5" stroke="#9a9a9a"/></g><g stroke="#ffffff" fill="none"><rect x="282.5" y="594.5" width="13" height="13" stroke-width="1.2"/><path d="M288.5,594.5 V549.5 M295.5,601.5 H341"/><polygon points="288.5,533.5 284.5,549.5 292.5,549.5"/><polygon points="357,601.5 341,597.5 341,605.5"/><path d="M283.5,513 L289,519 L294.5,513 M289,519 V524.5 M365,595 L377,607 M377,595 L365,607"/></g></g></svg>
<div style="position:absolute;left:259px;top:150px;width:534px;height:3px;background:linear-gradient(180deg,#b0b0b0,#333)"></div>
<div style="position:absolute;left:259px;top:151px;width:2px;height:478px;background:linear-gradient(90deg,#8a8a8a,#3a3a3a)"></div>
<div style="position:absolute;left:793px;top:153px;width:17px;height:476px;background:linear-gradient(90deg,#e8e8e8,#f6f6f6)"></div>
<svg style="position:absolute;left:797px;top:157px" width="10" height="8"><path d="M1,6 L9,6 L5,2 Z" fill="#333"/></svg>
<div style="position:absolute;left:794px;top:170px;width:15px;height:441px;background:linear-gradient(90deg,#fbfbfb,#e8e8e8 60%,#d4d4d4);border:1px solid #a8a8a8;border-radius:2px"></div>
<svg style="position:absolute;left:797px;top:617px" width="10" height="8"><path d="M1,2 L9,2 L5,6 Z" fill="#333"/></svg>
<svg style="position:absolute;left:797px;top:386px" width="9" height="9"><path d="M1,1.5 H8 M1,4.5 H8 M1,7.5 H8" stroke="#444" stroke-width="1.3"/></svg>
<div style="position:absolute;left:257px;top:629px;width:556px;height:21px;background:#f6f6f6"></div>
<div style="position:absolute;left:259px;top:630px;width:1px;height:18px;background:#9a9a9a"></div>
<div style="position:absolute;left:261px;top:631px;width:37px;height:17px;background:linear-gradient(180deg,#ededed,#e2e2e2)"></div>
<svg style="position:absolute;left:268px;top:634px" width="30" height="12"><path d="M2,5.5 L6,1.5 V9.5 Z M21,1.5 L25,5.5 L21,9.5 Z" fill="#333"/></svg>
<svg style="position:absolute;left:0px;top:0px;overflow:visible" width="1" height="1"><path d="M297.5,630.5 H492" stroke="#444" fill="none"/><path d="M361.5,630.5 L357.7,639 L362.2,646.5 H381.0 L388.3,630.5" fill="#ececec" stroke="#444"/><path d="M388.3,630.5 L384.5,639 L389.0,646.5 H407.8 L415.1,630.5" fill="#ececec" stroke="#444"/><path d="M415.1,630.5 L411.3,639 L415.8,646.5 H434.6 L441.9,630.5" fill="#ececec" stroke="#444"/><path d="M441.9,630.5 L438.1,639 L442.6,646.5 H461.4 L468.7,630.5" fill="#ececec" stroke="#444"/><path d="M468.7,630.5 L464.9,639 L469.4,646.5 H488.2 L495.5,630.5" fill="#ececec" stroke="#444"/><path d="M298,630.5 L305,647 H353.5 L361.5,630.5" fill="#fff" stroke="#444"/></svg>
<div style="position:absolute;left:307.6px;top:633.5px;font-family:'Liberation Sans',sans-serif;font-size:11px;color:#000;font-weight:bold;white-space:nowrap;line-height:1;">Модель</div>
<div style="position:absolute;left:363.4px;top:633.5px;font-family:'Liberation Sans',sans-serif;font-size:11px;color:#000;font-weight:normal;white-space:nowrap;line-height:1;">A4</div>
<div style="position:absolute;left:391px;top:633.5px;font-family:'Liberation Sans',sans-serif;font-size:11px;color:#000;font-weight:normal;white-space:nowrap;line-height:1;">A3</div>
<div style="position:absolute;left:417.7px;top:633.5px;font-family:'Liberation Sans',sans-serif;font-size:11px;color:#000;font-weight:normal;white-space:nowrap;line-height:1;">A2</div>
<div style="position:absolute;left:445.3px;top:633.5px;font-family:'Liberation Sans',sans-serif;font-size:11px;color:#000;font-weight:normal;white-space:nowrap;line-height:1;">A1</div>
<div style="position:absolute;left:472px;top:633.5px;font-family:'Liberation Sans',sans-serif;font-size:11px;color:#000;font-weight:normal;white-space:nowrap;line-height:1;">A0</div>
<div style="position:absolute;left:495px;top:632px;width:17px;height:16px;background:linear-gradient(#fdfdfd,#dfe4ea);border:1px solid #444;border-radius:2px"></div>
<div style="position:absolute;left:498px;top:637px;width:11px;height:3px;background:#2b8ee0"></div>
<div style="position:absolute;left:498px;top:641px;width:11px;height:1px;background:#888"></div>
<div style="position:absolute;left:498px;top:644px;width:11px;height:1px;background:#888"></div>
<div style="position:absolute;left:514px;top:630px;width:2px;height:19px;background:#9a9a9a"></div>
<div style="position:absolute;left:517px;top:631px;width:274px;height:17px;background:linear-gradient(180deg,#f4f4f4,#e8e8e8)"></div>
<svg style="position:absolute;left:520px;top:634px" width="270" height="12"><path d="M3,5.5 L7,1.5 V9.5 Z M261,1.5 L265,5.5 L261,9.5 Z" fill="#333"/></svg>
<div style="position:absolute;left:574px;top:632px;width:165px;height:14px;background:linear-gradient(180deg,#fdfdfd,#e4e4e4 60%,#d8d8d8);border:1px solid #a0a0a0;border-radius:2px"></div>
<svg style="position:absolute;left:652px;top:635px" width="8" height="8"><path d="M0.5,0 V8 M2.5,0 V8 M4.5,0 V8 M6.5,0 V8" stroke="#555"/></svg>
<svg style="position:absolute;left:797px;top:634px" width="14" height="14"><path d="M13,2 L2,13 M13,6 L6,13 M13,10 L10,13" stroke="#a8a8a8" stroke-width="1.2"/></svg>
<div style="position:absolute;left:256px;top:650px;width:559px;height:3px;background:#ffffff"></div>
<div style="position:absolute;left:256px;top:653px;width:559px;height:5px;background:linear-gradient(180deg,#8a8a8a,#535353 40%)"></div>
<div style="position:absolute;left:32px;top:658px;width:783px;height:70px;background:#c8c8c8"></div>
<div style="position:absolute;left:33px;top:659px;width:17px;height:68px;background:#a3a3a3"></div>
<svg style="position:absolute;left:33px;top:659px" width="17" height="68"><path d="M4.5,6 L11.5,13 M11.5,6 L4.5,13" stroke="#444" stroke-width="1.2"/><path d="M4.5,28.5 H12.5 M4.5,25.5 V32.5 M4.5,29 H10 V32 H4.5 M12.5,25.5 V32.5 M0.5,29 H4" stroke="#444" fill="none"/></svg>
<div style="position:absolute;left:35px;top:726px;transform:rotate(-90deg);transform-origin:0 0;font-family:'Liberation Sans';font-size:11px;color:#333;white-space:nowrap;line-height:11px;width:30px;overflow:hidden">Коман</div>
<div style="position:absolute;left:51px;top:659px;width:747px;height:53px;background:#efefef"></div>
<div style="position:absolute;left:798px;top:659px;width:17px;height:53px;background:#f0f0f0"></div>
<svg style="position:absolute;left:801px;top:665px" width="10" height="6"><path d="M1,5 H9 L5,1 Z" fill="#333"/></svg>
<svg style="position:absolute;left:801px;top:699px" width="10" height="6"><path d="M1,1 H9 L5,5 Z" fill="#333"/></svg>
<div style="position:absolute;left:50px;top:712px;width:765px;height:16px;background:#fff;border-top:1px solid #c8c8c8;border-left:1px solid #c8c8c8"></div>
<div style="position:absolute;left:51px;top:659px;width:747px;height:53px;overflow:hidden">
<div style="position:absolute;left:2.2px;top:-4.5px;font-family:'Liberation Mono',sans-serif;font-size:11.66px;color:#000;font-weight:normal;white-space:nowrap;line-height:1;">DIMRADIUS,DRA,РЗМРАДИУС,РРА - Радиус</div>
<div style="position:absolute;left:2.2px;top:10.5px;font-family:'Liberation Mono',sans-serif;font-size:11.66px;color:#000;font-weight:normal;white-space:nowrap;line-height:1;">Вставить размер [R-радиальный/D-диаметральный/J-б.радиус/N-дуговой/U-угловой/P-Свойства/G-групповой/]:</div>
<div style="position:absolute;left:2.2px;top:24.5px;font-family:'Liberation Mono',sans-serif;font-size:11.66px;color:#000;font-weight:normal;white-space:nowrap;line-height:1;">note - Универсальная выноска</div>
<div style="position:absolute;left:2.2px;top:38.5px;font-family:'Liberation Mono',sans-serif;font-size:11.66px;color:#000;font-weight:normal;white-space:nowrap;line-height:1;">Автосохранение: C:\Users\73B5~1\AppData\Local\Temp\Без имени0(17-54-07_28.05.2016).autosave</div>
</div>
<div style="position:absolute;left:53.2px;top:714.5px;font-family:'Liberation Mono',sans-serif;font-size:11.6px;color:#000;font-weight:normal;white-space:nowrap;line-height:1;">Команда:</div>
<div style="position:absolute;left:7px;top:728px;width:832px;height:24px;background:linear-gradient(180deg,#262626 0px,#262626 1px,#3b4049 1px,#3b4049 8px,#2e2e2e 8px,#2e2e2e 23px,#222 23px)"></div>
<div style="position:absolute;left:10.6px;top:733px;font-family:'Liberation Sans',sans-serif;font-size:10.8px;color:#f4f4f4;font-weight:normal;white-space:nowrap;line-height:1;">13427.7242,36510.6073,0</div>
<div style="position:absolute;left:222px;top:730px;width:34px;height:20px;background:linear-gradient(180deg,#fde3b6 0%,#f9c57c 45%,#f5b14f 55%,#f8d08e 100%);border:1px solid #6e5a3e;border-radius:2px;font-family:'Liberation Sans';font-size:11px;letter-spacing:-0.2px;line-height:18px;text-align:center;color:#000;white-space:nowrap;overflow:hidden">ШАГ</div>
<div style="position:absolute;left:256px;top:730px;width:41px;height:20px;background:linear-gradient(180deg,#fde3b6 0%,#f9c57c 45%,#f5b14f 55%,#f8d08e 100%);border:1px solid #6e5a3e;border-radius:2px;font-family:'Liberation Sans';font-size:11px;letter-spacing:-0.2px;line-height:18px;text-align:center;color:#000;white-space:nowrap;overflow:hidden">СЕТКА</div>
<div style="position:absolute;left:298px;top:730px;width:71px;height:20px;background:linear-gradient(180deg,#fde3b6 0%,#f9c57c 45%,#f5b14f 55%,#f8d08e 100%);border:1px solid #6e5a3e;border-radius:2px;font-family:'Liberation Sans';font-size:11px;letter-spacing:-0.2px;line-height:18px;text-align:center;color:#000;white-space:nowrap;overflow:hidden">оПРИВЯЗКА</div>
<div style="position:absolute;left:369px;top:730px;width:75px;height:20px;background:linear-gradient(180deg,#fde3b6 0%,#f9c57c 45%,#f5b14f 55%,#f8d08e 100%);border:1px solid #6e5a3e;border-radius:2px;font-family:'Liberation Sans';font-size:11px;letter-spacing:-0.2px;line-height:18px;text-align:center;color:#000;white-space:nowrap;overflow:hidden">ОТС-ОБЪЕКТ</div>
<div style="position:absolute;left:444px;top:730px;width:73px;height:20px;background:linear-gradient(180deg,#fde3b6 0%,#f9c57c 45%,#f5b14f 55%,#f8d08e 100%);border:1px solid #6e5a3e;border-radius:2px;font-family:'Liberation Sans';font-size:11px;letter-spacing:-0.2px;line-height:18px;text-align:center;color:#000;white-space:nowrap;overflow:hidden">ОТС-ПОЛЯР</div>
<div style="position:absolute;left:548px;top:729px;width:291px;height:23px;background:linear-gradient(180deg,#e2e6ea,#c9ced4 60%,#b4bac2)"></div>
<div style="position:absolute;left:548px;top:729px;width:1px;height:23px;background:#1a1a1a"></div>
<div style="position:absolute;left:556px;top:731px;width:19px;height:18px;background:#2b9ee6;border:1px solid #b9bec6;border-radius:3px"></div>
<svg style="position:absolute;left:557px;top:732px;overflow:visible" width="16" height="16" viewBox="0 0 16 16"><rect x="0" y="0" width="16" height="16" fill="#2b9ee6"/><path d="M3,16 V9 Q3,3 9,3 H16 M7,16 V10 Q7,7 10,7 H16" fill="none" stroke="#fff" stroke-width="1.5"/></svg>
<div style="position:absolute;left:578px;top:731px;width:20px;height:18px;background:linear-gradient(180deg,#fcfcfd,#e6e9ee);border:1px solid #b9bec6;border-radius:3px"></div>
<svg style="position:absolute;left:580px;top:732px;overflow:visible" width="16" height="16" viewBox="0 0 16 16"><rect x="0.5" y="0.5" width="15" height="15" fill="#dfe3e8" stroke="#9aa0a8"/><path d="M5,3 H14 V12 Z" fill="#5fb0ea"/><path d="M5,6 H14 M5,9 H14 M8,3 V12 M11,3 V12" stroke="#fff" stroke-width="0.8"/><path d="M2,2 L14,14 H2 Z" fill="none" stroke="#333"/></svg>
<div style="position:absolute;left:690px;top:731px;width:20px;height:18px;background:linear-gradient(180deg,#fcfcfd,#e6e9ee);border:1px solid #b9bec6;border-radius:3px"></div>
<svg style="position:absolute;left:692px;top:732px;overflow:visible" width="16" height="16" viewBox="0 0 16 16"><path d="M4,8 V3 Q4,2 5,2 Q6,2 6,3 V7 V1.5 Q6,0.5 7,0.5 Q8,0.5 8,1.5 V7 V2 Q8,1 9,1 Q10,1 10,2 V7 V3 Q10,2 11,2 Q12,2 12,3 V10 Q12,15 8,15 Q5,15 3,12 L1,9 Q1,7 3,8 Z" fill="#f2c8a8" stroke="#8a5a40" stroke-width="0.8"/><path d="M11,15 L16,10 V15 Z" fill="#1e6fd0"/></svg>
<div style="position:absolute;left:712px;top:731px;width:20px;height:18px;background:linear-gradient(180deg,#fcfcfd,#e6e9ee);border:1px solid #b9bec6;border-radius:3px"></div>
<svg style="position:absolute;left:714px;top:732px;overflow:visible" width="16" height="16" viewBox="0 0 16 16"><circle cx="7" cy="7" r="5.5" fill="#d8eefa" stroke="#333" stroke-width="1.2"/><path d="M11,11 L15,15" stroke="#1e7fd0" stroke-width="2"/></svg>
<div style="position:absolute;left:734px;top:731px;width:20px;height:18px;background:linear-gradient(180deg,#fcfcfd,#e6e9ee);border:1px solid #b9bec6;border-radius:3px"></div>
<svg style="position:absolute;left:736px;top:732px;overflow:visible" width="16" height="16" viewBox="0 0 16 16"><rect x="0.5" y="0.5" width="15" height="15" fill="none" stroke="#d01010" stroke-width="1.2"/><circle cx="7" cy="7" r="5.5" fill="#d8eefa" stroke="#333" stroke-width="1.2"/><path d="M11,11 L15,15" stroke="#1e7fd0" stroke-width="2"/></svg>
<div style="position:absolute;left:756px;top:731px;width:20px;height:18px;background:linear-gradient(180deg,#fcfcfd,#e6e9ee);border:1px solid #b9bec6;border-radius:3px"></div>
<svg style="position:absolute;left:758px;top:732px;overflow:visible" width="16" height="16" viewBox="0 0 16 16"><circle cx="7" cy="7" r="5.5" fill="#d8eefa" stroke="#333" stroke-width="1.2"/><rect x="4.5" y="4.5" width="5" height="5" fill="none" stroke="#333"/><path d="M11,11 L15,15" stroke="#1e7fd0" stroke-width="2"/></svg>
<div style="position:absolute;left:778px;top:731px;width:20px;height:18px;background:linear-gradient(180deg,#fcfcfd,#e6e9ee);border:1px solid #b9bec6;border-radius:3px"></div>
<svg style="position:absolute;left:780px;top:732px;overflow:visible" width="16" height="16" viewBox="0 0 16 16"><path d="M3,7 Q4,2 9,2.5 Q12,3 13,5" fill="none" stroke="#2aa82a" stroke-width="2"/><path d="M14,1 V7 H9 Z" fill="#2aa82a"/><path d="M13,9 Q12,14 7,13.5 Q4,13 3,11" fill="none" stroke="#2aa82a" stroke-width="2"/><path d="M2,15 V9 H7 Z" fill="#2aa82a"/></svg>
<div style="position:absolute;left:800px;top:731px;width:22px;height:18px;background:linear-gradient(180deg,#fcfcfd,#e6e9ee);border:1px solid #b9bec6;border-radius:3px"></div>
<svg style="position:absolute;left:803px;top:732px;overflow:visible" width="16" height="16" viewBox="0 0 16 16"><path d="M0.5,4 V0.5 H4 M12,0.5 H15.5 V4 M15.5,12 V15.5 H12 M4,15.5 H0.5 V12" fill="none" stroke="#333"/><rect x="2.5" y="3.5" width="11" height="9" fill="#2b9ee6" stroke="#333"/></svg>
<svg style="position:absolute;left:826px;top:738px;overflow:visible" width="12" height="9" viewBox="0 0 12 9"><rect x="9" y="0" width="2" height="2" fill="#333"/><rect x="6" y="3" width="2" height="2" fill="#333"/><rect x="9" y="3" width="2" height="2" fill="#333"/><rect x="3" y="6" width="2" height="2" fill="#333"/><rect x="6" y="6" width="2" height="2" fill="#333"/><rect x="9" y="6" width="2" height="2" fill="#333"/></svg>
<div style="position:absolute;left:600px;top:731px;width:89px;height:18px;background:linear-gradient(180deg,#fbfbfc,#e4e7eb);border:1px solid #b9bec6;border-radius:3px;font-family:'Liberation Sans';font-size:11px;line-height:17px;text-align:center;color:#000">m1:100</div>
<svg style="position:absolute;left:12px;top:62px;overflow:visible" width="3" height="16" viewBox="0 0 3 16"><rect x="1" y="1" width="2" height="2" fill="#fff"/><rect x="0" y="0" width="2" height="2" fill="#1c1c1c"/><rect x="1" y="5" width="2" height="2" fill="#fff"/><rect x="0" y="4" width="2" height="2" fill="#1c1c1c"/><rect x="1" y="9" width="2" height="2" fill="#fff"/><rect x="0" y="8" width="2" height="2" fill="#1c1c1c"/><rect x="1" y="13" width="2" height="2" fill="#fff"/><rect x="0" y="12" width="2" height="2" fill="#1c1c1c"/></svg>
<svg style="position:absolute;left:20px;top:61px;overflow:visible" width="16" height="16" viewBox="0 0 16 16"><ellipse cx="8" cy="10" rx="7" ry="3.5" fill="none" stroke="#333" stroke-width="1"/><path d="M3,13.5 L5,11.5 L5.5,14.5 Z" fill="#222"/><path d="M8,0.5 L11.5,4.5 H9.3 V15.5 H6.7 V4.5 H4.5 Z" fill="#1d7fe0"/></svg>
<svg style="position:absolute;left:42px;top:61px;overflow:visible" width="16" height="16" viewBox="0 0 16 16"><defs><radialGradient id="sg" cx="0.35" cy="0.35" r="0.7"><stop offset="0" stop-color="#fff"/><stop offset="1" stop-color="#777"/></radialGradient><radialGradient id="sb" cx="0.35" cy="0.35" r="0.7"><stop offset="0" stop-color="#e8f6ff"/><stop offset="1" stop-color="#3b8fc8"/></radialGradient></defs><circle cx="7" cy="9" r="5.5" fill="url(#sg)"/><path d="M1,15 L15,1" stroke="#888" stroke-width="0.8"/><circle cx="11" cy="5" r="3.2" fill="url(#sb)" stroke="#333" stroke-width="0.5"/></svg>
<svg style="position:absolute;left:70px;top:61px;overflow:visible" width="16" height="16" viewBox="0 0 16 16"><polygon points="0.5,3.5 3.5,0.5 15.5,0.5 12.5,3.5" fill="#7cc8ee" stroke="none"/><path d="M3.5,0.5 V12.5 H15.5 M3.5,12.5 L0.5,15.5" fill="none" stroke="#8a8a8a"/><path d="M0.5,3.5 L3.5,0.5 H15.5 V12.5 L12.5,15.5 H0.5 Z M0.5,3.5 H12.5 V15.5 M12.5,3.5 L15.5,0.5" fill="none" stroke="#3a3a3a"/></svg>
<svg style="position:absolute;left:91px;top:61px;overflow:visible" width="16" height="16" viewBox="0 0 16 16"><polygon points="0.5,15.5 3.5,12.5 15.5,12.5 12.5,15.5" fill="#7cc8ee" stroke="none"/><path d="M3.5,0.5 V12.5 H15.5 M3.5,12.5 L0.5,15.5" fill="none" stroke="#8a8a8a"/><path d="M0.5,3.5 L3.5,0.5 H15.5 V12.5 L12.5,15.5 H0.5 Z M0.5,3.5 H12.5 V15.5 M12.5,3.5 L15.5,0.5" fill="none" stroke="#3a3a3a"/></svg>
<svg style="position:absolute;left:112px;top:61px;overflow:visible" width="16" height="16" viewBox="0 0 16 16"><polygon points="0.5,3.5 3.5,0.5 3.5,12.5 0.5,15.5" fill="#7cc8ee" stroke="none"/><path d="M3.5,0.5 V12.5 H15.5 M3.5,12.5 L0.5,15.5" fill="none" stroke="#8a8a8a"/><path d="M0.5,3.5 L3.5,0.5 H15.5 V12.5 L12.5,15.5 H0.5 Z M0.5,3.5 H12.5 V15.5 M12.5,3.5 L15.5,0.5" fill="none" stroke="#3a3a3a"/></svg>
<svg style="position:absolute;left:133px;top:61px;overflow:visible" width="16" height="16" viewBox="0 0 16 16"><polygon points="12.5,3.5 15.5,0.5 15.5,12.5 12.5,15.5" fill="#7cc8ee" stroke="none"/><path d="M3.5,0.5 V12.5 H15.5 M3.5,12.5 L0.5,15.5" fill="none" stroke="#8a8a8a"/><path d="M0.5,3.5 L3.5,0.5 H15.5 V12.5 L12.5,15.5 H0.5 Z M0.5,3.5 H12.5 V15.5 M12.5,3.5 L15.5,0.5" fill="none" stroke="#3a3a3a"/></svg>
<svg style="position:absolute;left:154px;top:61px;overflow:visible" width="16" height="16" viewBox="0 0 16 16"><polygon points="0.5,3.5 12.5,3.5 12.5,15.5 0.5,15.5" fill="#7cc8ee" stroke="none"/><path d="M3.5,0.5 V12.5 H15.5 M3.5,12.5 L0.5,15.5" fill="none" stroke="#8a8a8a"/><path d="M0.5,3.5 L3.5,0.5 H15.5 V12.5 L12.5,15.5 H0.5 Z M0.5,3.5 H12.5 V15.5 M12.5,3.5 L15.5,0.5" fill="none" stroke="#3a3a3a"/></svg>
<svg style="position:absolute;left:175px;top:61px;overflow:visible" width="16" height="16" viewBox="0 0 16 16"><polygon points="3.5,0.5 15.5,0.5 15.5,12.5 3.5,12.5" fill="#7cc8ee" stroke="none"/><path d="M3.5,0.5 V12.5 H15.5 M3.5,12.5 L0.5,15.5" fill="none" stroke="#8a8a8a"/><path d="M0.5,3.5 L3.5,0.5 H15.5 V12.5 L12.5,15.5 H0.5 Z M0.5,3.5 H12.5 V15.5 M12.5,3.5 L15.5,0.5" fill="none" stroke="#3a3a3a"/></svg>
<svg style="position:absolute;left:205px;top:61px;overflow:visible" width="13" height="16" viewBox="0 0 13 16"><polygon points="6.5,0.5 12.5,4.5 12.5,11.5 6.5,15.5 0.5,11.5 0.5,4.5" fill="#fafafa"/><polygon points="6.5,4 9.5,8 6.5,11 3.5,8" fill="#b8bcc2"/><polygon points="0.5,4.5 6.5,8 6.5,15.5 0.5,11.5" fill="#1a9ae0"/><path d="M6.5,0.5 V4 M0.5,4.5 L3.5,8 M12.5,4.5 L9.5,8 M3.5,8 L6.5,11 L9.5,8 M6.5,11 V15.5" stroke="#777" fill="none"/><polygon points="6.5,0.5 12.5,4.5 12.5,11.5 6.5,15.5 0.5,11.5 0.5,4.5" fill="none" stroke="#2a2a2a" stroke-width="1.2"/></svg>
<svg style="position:absolute;left:226px;top:61px;overflow:visible" width="13" height="16" viewBox="0 0 13 16"><polygon points="6.5,0.5 12.5,4.5 12.5,11.5 6.5,15.5 0.5,11.5 0.5,4.5" fill="#fafafa"/><polygon points="6.5,4 9.5,8 6.5,11 3.5,8" fill="#b8bcc2"/><polygon points="12.5,4.5 6.5,8 6.5,15.5 12.5,11.5" fill="#1a9ae0"/><path d="M6.5,0.5 V4 M0.5,4.5 L3.5,8 M12.5,4.5 L9.5,8 M3.5,8 L6.5,11 L9.5,8 M6.5,11 V15.5" stroke="#777" fill="none"/><polygon points="6.5,0.5 12.5,4.5 12.5,11.5 6.5,15.5 0.5,11.5 0.5,4.5" fill="none" stroke="#2a2a2a" stroke-width="1.2"/></svg>
<svg style="position:absolute;left:247px;top:61px;overflow:visible" width="13" height="16" viewBox="0 0 13 16"><polygon points="6.5,0.5 12.5,4.5 12.5,11.5 6.5,15.5 0.5,11.5 0.5,4.5" fill="#fafafa"/><polygon points="6.5,4 9.5,8 6.5,11 3.5,8" fill="#b8bcc2"/><polygon points="6.5,0.5 12.5,4.5 12.5,11.5 6.5,8" fill="#1a9ae0"/><path d="M6.5,0.5 V4 M0.5,4.5 L3.5,8 M12.5,4.5 L9.5,8 M3.5,8 L6.5,11 L9.5,8 M6.5,11 V15.5" stroke="#777" fill="none"/><polygon points="6.5,0.5 12.5,4.5 12.5,11.5 6.5,15.5 0.5,11.5 0.5,4.5" fill="none" stroke="#2a2a2a" stroke-width="1.2"/></svg>
<svg style="position:absolute;left:268px;top:61px;overflow:visible" width="13" height="16" viewBox="0 0 13 16"><polygon points="6.5,0.5 12.5,4.5 12.5,11.5 6.5,15.5 0.5,11.5 0.5,4.5" fill="#fafafa"/><polygon points="6.5,4 9.5,8 6.5,11 3.5,8" fill="#b8bcc2"/><polygon points="6.5,0.5 0.5,4.5 0.5,11.5 6.5,8" fill="#1a9ae0"/><path d="M6.5,0.5 V4 M0.5,4.5 L3.5,8 M12.5,4.5 L9.5,8 M3.5,8 L6.5,11 L9.5,8 M6.5,11 V15.5" stroke="#777" fill="none"/><polygon points="6.5,0.5 12.5,4.5 12.5,11.5 6.5,15.5 0.5,11.5 0.5,4.5" fill="none" stroke="#2a2a2a" stroke-width="1.2"/></svg>
<svg style="position:absolute;left:12px;top:86px;overflow:visible" width="3" height="16" viewBox="0 0 3 16"><rect x="1" y="1" width="2" height="2" fill="#fff"/><rect x="0" y="0" width="2" height="2" fill="#1c1c1c"/><rect x="1" y="5" width="2" height="2" fill="#fff"/><rect x="0" y="4" width="2" height="2" fill="#1c1c1c"/><rect x="1" y="9" width="2" height="2" fill="#fff"/><rect x="0" y="8" width="2" height="2" fill="#1c1c1c"/><rect x="1" y="13" width="2" height="2" fill="#fff"/><rect x="0" y="12" width="2" height="2" fill="#1c1c1c"/></svg>
<svg style="position:absolute;left:22px;top:85px;overflow:visible" width="16" height="16" viewBox="0 0 16 16"><path d="M2.5,0.5 H10 L13.5,4 V15.5 H2.5 Z" fill="#dbeefa" stroke="#3c3c3c"/><path d="M10,0.5 V4 H13.5" fill="#fff" stroke="#3c3c3c"/></svg>
<svg style="position:absolute;left:41px;top:85px;overflow:visible" width="16" height="16" viewBox="0 0 16 16"><path d="M0.5,2.5 H5.5 L7,4 H13.5 V13.5 H0.5 Z" fill="#9a9a9a" stroke="#3c3c3c"/><path d="M0.5,13.5 L3.5,6.5 H15.5 L12.5,13.5 Z" fill="#a9dcf5" stroke="#3c3c3c"/></svg>
<svg style="position:absolute;left:62px;top:85px;overflow:visible" width="16" height="16" viewBox="0 0 16 16"><path d="M0.5,0.5 H13 L15.5,3 V15.5 H0.5 Z" fill="#8fd0f0" stroke="#333"/><rect x="3.5" y="0.5" width="8" height="5" fill="#fff" stroke="#333"/><rect x="9" y="1.5" width="1.5" height="3" fill="#333"/><rect x="3.5" y="8.5" width="9" height="7" fill="#f4f4f4" stroke="#333"/><path d="M5,11 H11 M5,13 H11" stroke="#555"/></svg>
<svg style="position:absolute;left:91px;top:85px;overflow:visible" width="16" height="16" viewBox="0 0 16 16"><path d="M4,0.5 H10 L12,2.5 V7 H4 Z" fill="#fff" stroke="#1e6fc0"/><path d="M6,1 L3,3 L6,5" fill="none" stroke="#1e8ee0" stroke-width="1.5"/><path d="M1,7.5 H14 L15.5,10 V14 L12,15.5 H2 L0.5,12 Z" fill="#b9d5ea" stroke="#1e5fa0"/><path d="M5,14 L13,8" stroke="#555" stroke-width="2"/></svg>
<svg style="position:absolute;left:112px;top:85px;overflow:visible" width="16" height="16" viewBox="0 0 16 16"><path d="M1.5,0.5 H10 L13.5,4 V15.5 H1.5 Z" fill="#e6f3fb" stroke="#3c3c3c"/><circle cx="7" cy="8" r="4.5" fill="#dfeef8" stroke="#333" stroke-width="1.2"/><path d="M5,10.5 L7,5.5 L9,10.5" fill="none" stroke="#333"/><path d="M10.5,11.5 L14.5,15.5" stroke="#1e8ee0" stroke-width="2"/></svg>
<svg style="position:absolute;left:133px;top:85px;overflow:visible" width="16" height="16" viewBox="0 0 16 16"><path d="M4,0.5 H10 L12,2.5 V7 H4 Z" fill="#fff" stroke="#1e6fc0"/><path d="M6,1 L3,3 L6,5" fill="none" stroke="#1e8ee0" stroke-width="1.5"/><path d="M1,7.5 H14 L15.5,10 V14 L12,15.5 H2 L0.5,12 Z" fill="#b9d5ea" stroke="#1e5fa0"/><path d="M5,14 L13,8" stroke="#555" stroke-width="2"/><circle cx="12" cy="12" r="3.5" fill="#d6207a"/><circle cx="12" cy="12" r="1.3" fill="#6a7da0"/></svg>
<svg style="position:absolute;left:154px;top:85px;overflow:visible" width="16" height="16" viewBox="0 0 16 16"><path d="M4,0.5 H10 L12,2.5 V7 H4 Z" fill="#fff" stroke="#333"/><path d="M0.5,7.5 H15.5 V14.5 H0.5 Z" fill="#e8e8e8" stroke="#333"/><rect x="2" y="9" width="8" height="2" fill="#5fb0e0"/><path d="M5,15 L15,5" stroke="#333" stroke-width="2.2"/><path d="M12,8 L15.5,4.5" stroke="#1e8ee0" stroke-width="1.5"/></svg>
<svg style="position:absolute;left:183px;top:85px;overflow:visible" width="16" height="16" viewBox="0 0 16 16"><path d="M1,1 L10,11 M15,1 L6,11" stroke="#555" stroke-width="1.6"/><path d="M1,1 L9,10" stroke="#ddd" stroke-width="0.6"/><circle cx="8" cy="9.5" r="1.3" fill="#222"/><circle cx="4" cy="13" r="2.3" fill="none" stroke="#1e8ee0" stroke-width="1.4"/><circle cx="12" cy="13" r="2.3" fill="none" stroke="#1e8ee0" stroke-width="1.4"/></svg>
<svg style="position:absolute;left:204px;top:85px;overflow:visible" width="16" height="16" viewBox="0 0 16 16"><path d="M0.5,0.5 H7 L9.5,3 V12.5 H0.5 Z" fill="#f6f6f6" stroke="#3c3c3c"/><path d="M2,3 H7 M2,5 H7 M2,7 H7 M2,9 H7" stroke="#999"/><path d="M5.5,4.5 H12.5 L15.5,7.5 V15.5 H5.5 Z" fill="#e6f3fb" stroke="#3c3c3c"/><path d="M7,8.5 H14 M7,10.5 H14 M7,12.5 H14" stroke="#4a9ad8"/></svg>
<svg style="position:absolute;left:225px;top:85px;overflow:visible" width="16" height="16" viewBox="0 0 16 16"><rect x="0.5" y="1.5" width="10" height="12" fill="#2b9ee6" stroke="#3c3c3c"/><rect x="3" y="0.5" width="5" height="3" fill="#fff" stroke="#3c3c3c"/><path d="M5.5,5.5 H12.5 L15.5,8.5 V15.5 H5.5 Z" fill="#e6f3fb" stroke="#3c3c3c"/><path d="M7,9.5 H14 M7,11.5 H14 M7,13.5 H14" stroke="#4a9ad8"/></svg>
<svg style="position:absolute;left:246px;top:85px;overflow:visible" width="16" height="16" viewBox="0 0 16 16"><rect x="0.5" y="0.5" width="13" height="15" fill="#f8f8f8" stroke="#333"/><rect x="1" y="1" width="12" height="2" fill="#2b9ee6"/><path d="M3,6 L4,5 M7,5 L8,6" stroke="#555"/><path d="M3,13 Q6,9 9,11 L8,14 Z" fill="#333"/><path d="M8,11 L15,5" stroke="#1e6fc0" stroke-width="1.8"/></svg>
<svg style="position:absolute;left:267px;top:85px;overflow:visible" width="16" height="16" viewBox="0 0 16 16"><path d="M0,15.5 H5 M11,15.5 H16" stroke="#222"/><path d="M7,14 L15,2" stroke="#1e8ee0" stroke-width="3.2" stroke-linecap="round"/><path d="M5,14.5 L8.5,10" stroke="#e05a2a" stroke-width="3" stroke-linecap="round"/></svg>
<svg style="position:absolute;left:296px;top:85px;overflow:visible" width="16" height="16" viewBox="0 0 16 16"><path d="M0.5,8 L6,2.5 V5.5 H10 Q15.5,5.5 15.5,11 V14 L13,12 Q12.5,10 10,10 H6 V13.5 Z" fill="#5fb2e6" stroke="#2a6ea8"/></svg>
<svg style="position:absolute;left:317px;top:85px;overflow:visible" width="16" height="16" viewBox="0 0 16 16"><path d="M15,6 L11,3 V5 H7 Q1,5 1,10 V14 L4,12 Q4,10 7,10 H11" fill="#dadcdf" stroke="#c4c6ca"/></svg>
<svg style="position:absolute;left:331px;top:86px;overflow:visible" width="3" height="16" viewBox="0 0 3 16"><rect x="1" y="1" width="2" height="2" fill="#fff"/><rect x="0" y="0" width="2" height="2" fill="#1c1c1c"/><rect x="1" y="5" width="2" height="2" fill="#fff"/><rect x="0" y="4" width="2" height="2" fill="#1c1c1c"/><rect x="1" y="9" width="2" height="2" fill="#fff"/><rect x="0" y="8" width="2" height="2" fill="#1c1c1c"/><rect x="1" y="13" width="2" height="2" fill="#fff"/><rect x="0" y="12" width="2" height="2" fill="#1c1c1c"/></svg>
<svg style="position:absolute;left:338px;top:85px;overflow:visible" width="16" height="16" viewBox="0 0 16 16"><path d="M0.5,2 H11 V4.5 L10,3 H7 V14 L8.5,15.5 H3.5 L5,14 V3 H2 L0.5,4.5 Z" fill="#444"/><circle cx="13" cy="3" r="2.5" fill="#ffd21a"/><path d="M13,0 V6 M10,3 H16 M11,1 L15,5 M15,1 L11,5" stroke="#ffb000" stroke-width="0.8"/><path d="M7,15 L14,7" stroke="#333" stroke-width="2"/><path d="M11,10 L14.5,6" stroke="#1e8ee0" stroke-width="1.5"/></svg>
<svg style="position:absolute;left:577px;top:85px;overflow:visible" width="16" height="16" viewBox="0 0 16 16"><path d="M0.5,0.5 V7 M15.5,0.5 V7 M0.5,3.5 H15.5" stroke="#333"/><path d="M0.5,3.5 L3,2 V5 Z M15.5,3.5 L13,2 V5 Z" fill="#333"/><path d="M6,15.5 L14,7" stroke="#444" stroke-width="2.2"/><path d="M11,10 L15,6" stroke="#1e8ee0" stroke-width="1.6"/></svg>
<svg style="position:absolute;left:812px;top:86px;overflow:visible" width="3" height="16" viewBox="0 0 3 16"><rect x="1" y="1" width="2" height="2" fill="#fff"/><rect x="0" y="0" width="2" height="2" fill="#1c1c1c"/><rect x="1" y="5" width="2" height="2" fill="#fff"/><rect x="0" y="4" width="2" height="2" fill="#1c1c1c"/><rect x="1" y="9" width="2" height="2" fill="#fff"/><rect x="0" y="8" width="2" height="2" fill="#1c1c1c"/><rect x="1" y="13" width="2" height="2" fill="#fff"/><rect x="0" y="12" width="2" height="2" fill="#1c1c1c"/></svg>
<svg style="position:absolute;left:819px;top:85px;overflow:visible" width="16" height="16" viewBox="0 0 16 16"><path d="M1,5 Q1,2 4,2 H8 V12 Q8,15 5,15 H1 Z" fill="#1e8ee0"/><path d="M9,2 H15 V11 Q15,15 11,15 H6 L9,12 Z" fill="#3cb03c"/><path d="M8,2 H10 V12 L8,14 Z" fill="#e8f4ff"/></svg>
<svg style="position:absolute;left:12px;top:110px;overflow:visible" width="3" height="16" viewBox="0 0 3 16"><rect x="1" y="1" width="2" height="2" fill="#fff"/><rect x="0" y="0" width="2" height="2" fill="#1c1c1c"/><rect x="1" y="5" width="2" height="2" fill="#fff"/><rect x="0" y="4" width="2" height="2" fill="#1c1c1c"/><rect x="1" y="9" width="2" height="2" fill="#fff"/><rect x="0" y="8" width="2" height="2" fill="#1c1c1c"/><rect x="1" y="13" width="2" height="2" fill="#fff"/><rect x="0" y="12" width="2" height="2" fill="#1c1c1c"/></svg>
<svg style="position:absolute;left:20px;top:109px;overflow:visible" width="16" height="16" viewBox="0 0 16 16"><rect x="0.5" y="0.5" width="8" height="7" fill="#e8f0ff" stroke="#2a4ad0"/><rect x="3.5" y="3.5" width="8" height="7" fill="#e8f0ff" stroke="#2a4ad0"/><rect x="6.5" y="6.5" width="8" height="7" fill="#e8f0ff" stroke="#2a4ad0"/><path d="M4,14 L9,9 L13,14 Z" fill="#20a040"/><circle cx="13" cy="13" r="3" fill="none" stroke="#f0a000" stroke-width="1.5"/></svg>
<svg style="position:absolute;left:52px;top:110px;overflow:visible" width="3" height="16" viewBox="0 0 3 16"><rect x="1" y="1" width="2" height="2" fill="#fff"/><rect x="0" y="0" width="2" height="2" fill="#1c1c1c"/><rect x="1" y="5" width="2" height="2" fill="#fff"/><rect x="0" y="4" width="2" height="2" fill="#1c1c1c"/><rect x="1" y="9" width="2" height="2" fill="#fff"/><rect x="0" y="8" width="2" height="2" fill="#1c1c1c"/><rect x="1" y="13" width="2" height="2" fill="#fff"/><rect x="0" y="12" width="2" height="2" fill="#1c1c1c"/></svg>
<div style="position:absolute;left:59px;top:107px;width:20px;height:20px;background:linear-gradient(180deg,#fde9c4,#f9c77e);border:1px solid #e9b060;border-radius:2px"></div>
<svg style="position:absolute;left:61px;top:109px;overflow:visible" width="16" height="16" viewBox="0 0 16 16"><rect x="2.5" y="2.5" width="11" height="13" fill="#dcecf6" stroke="#3c3c3c"/><rect x="5" y="1" width="6" height="3" fill="#fff" stroke="#3c3c3c"/><path d="M4,7 L5,8 L6.5,6 M4,10 L5,11 L6.5,9" stroke="#333" fill="none"/><path d="M6,15 L15,6" stroke="#38a838" stroke-width="3"/><path d="M5,16 L6.5,13" stroke="#e86060" stroke-width="1.5"/></svg>
<svg style="position:absolute;left:89px;top:109px;overflow:visible" width="16" height="16" viewBox="0 0 16 16"><path d="M1,3 H15 M2,5 H14 M1,7 H15" stroke="#444" stroke-width="1.2"/><circle cx="8.5" cy="8.5" r="5" fill="#c8d0d8" stroke="#333" stroke-width="1.3"/><path d="M5,8.5 H12" stroke="#fff"/><path d="M12,12 L15.5,15.5" stroke="#1e8ee0" stroke-width="2"/></svg>
<div style="position:absolute;left:42px;top:108px;width:1px;height:18px;background:#8a9099"></div><div style="position:absolute;left:43px;top:108px;width:1px;height:18px;background:#fafafa"></div>
<div style="position:absolute;left:82px;top:108px;width:1px;height:18px;background:#8a9099"></div><div style="position:absolute;left:83px;top:108px;width:1px;height:18px;background:#fafafa"></div>
<svg style="position:absolute;left:122px;top:109px;overflow:visible" width="16" height="16" viewBox="0 0 16 16"><path d="M8,1 Q13.5,1 13.5,6 Q13.5,9 11,11 V12 H5 V11 Q2.5,9 2.5,6 Q2.5,1 8,1 Z" fill="#fff6c8" stroke="#f0b030"/><rect x="5" y="12" width="6" height="3" rx="1" fill="#555"/></svg>
<svg style="position:absolute;left:137px;top:109px;overflow:visible" width="16" height="16" viewBox="0 0 16 16"><g stroke="#f09a00" stroke-width="2"><path d="M8,8 L15.00,8.00"/><path d="M8,8 L14.06,11.50"/><path d="M8,8 L11.50,14.06"/><path d="M8,8 L8.00,15.00"/><path d="M8,8 L4.50,14.06"/><path d="M8,8 L1.94,11.50"/><path d="M8,8 L1.00,8.00"/><path d="M8,8 L1.94,4.50"/><path d="M8,8 L4.50,1.94"/><path d="M8,8 L8.00,1.00"/><path d="M8,8 L11.50,1.94"/><path d="M8,8 L14.06,4.50"/></g><circle cx="8" cy="8" r="5" fill="#ffe81a" stroke="#f0a000"/></svg>
<svg style="position:absolute;left:155px;top:109px;overflow:visible" width="16" height="16" viewBox="0 0 16 16"><path d="M7,8 V4 Q7,1 10.5,1 Q14,1 14,4 V6" fill="none" stroke="#c89a40" stroke-width="2"/><rect x="0.5" y="7.5" width="10" height="8" fill="#d8c8a0" stroke="#a07830"/></svg>
<svg style="position:absolute;left:172px;top:110px;overflow:visible" width="12" height="14" viewBox="0 0 12 14"><rect x="0.5" y="1.5" width="11" height="11" fill="#fff" stroke="#000"/><path d="M0.5,1.5 H11.5 V12.5 Z" fill="#000"/></svg>
<svg style="position:absolute;left:39px;top:155px;overflow:visible" width="16" height="16" viewBox="0 0 16 16"><rect x="0.5" y="0.5" width="15" height="15" fill="#eaf2f8" stroke="#333" stroke-dasharray="1,1"/><path d="M8,5 V11 M5,8 H11" stroke="#1a4a98" stroke-width="2"/><rect x="12.5" y="12.5" width="2.5" height="2.5" fill="#fff" stroke="#555" stroke-width="0.6"/></svg>
<svg style="position:absolute;left:57px;top:153px;overflow:visible" width="18" height="18" viewBox="0 0 18 18"><rect x="0.5" y="0.5" width="17" height="17" rx="2" fill="#fde6bd" stroke="#f2c070"/><rect x="2.5" y="2.5" width="13" height="13" fill="#e0ecf6" stroke="#333" stroke-dasharray="1,1"/><path d="M6.5,6 L10,3.8 V14" stroke="#2a62a8" stroke-width="2.6" fill="none"/></svg>
<div style="position:absolute;left:81px;top:156px;width:1px;height:14px;background:#8a9099"></div><div style="position:absolute;left:82px;top:156px;width:1px;height:14px;background:#fafafa"></div>
<svg style="position:absolute;left:87px;top:155px;overflow:visible" width="16" height="16" viewBox="0 0 16 16"><rect x="0.5" y="0.5" width="14" height="14" fill="#e8f4fb" stroke="#333" stroke-dasharray="2,1"/><path d="M9,6 V15 L11,13 L13,16 L14,15 L12.5,12 H15 Z" fill="#fff" stroke="#222" stroke-width="0.8"/></svg>
<svg style="position:absolute;left:107px;top:155px;overflow:visible" width="16" height="16" viewBox="0 0 16 16"><path d="M0.5,8.5 L7,1 V16 Z" fill="#e6f4fb" stroke="#1e8ee0" stroke-width="1.4"/><path d="M8.5,0.5 H15.5 V7.5 Z" fill="#e6f4fb" stroke="#1e8ee0" stroke-width="1.4"/><path d="M8,6 V15 L10,13 L12,16 L13,15 L11.5,12 H14 Z" fill="#fff" stroke="#222" stroke-width="0.8"/></svg>
<svg style="position:absolute;left:127px;top:155px;overflow:visible" width="16" height="16" viewBox="0 0 16 16"><path d="M0.5,0.5 H13 L8,6 V15 L5.5,13 V6 Z" fill="#1e8ee0" stroke="#1a6ab0" stroke-width="0.8"/><path d="M13,4 L8,10 H11 L8,16 L15,9 H12 L15,4 Z" fill="#ffd21a" stroke="#c89000" stroke-width="0.6"/></svg>
<div style="position:absolute;left:148px;top:156px;width:1px;height:14px;background:#8a9099"></div><div style="position:absolute;left:149px;top:156px;width:1px;height:14px;background:#fafafa"></div>
<svg style="position:absolute;left:155px;top:155px;overflow:visible" width="16" height="16" viewBox="0 0 16 16"><path d="M0.5,5.5 H6 L7,4.5 H12.5 V15.5 H0.5 Z" fill="#9c9c9c" stroke="#6a6a6a"/><path d="M2,9 H11 M2,11 H11 M2,13 H11" stroke="#c8c8c8"/><path d="M6,6 Q7,2 12,2 V0 L16,3.5 L12,7 V5 Q9,5 6,6 Z" fill="#777"/></svg>
<svg style="position:absolute;left:176px;top:155px;overflow:visible" width="16" height="16" viewBox="0 0 16 16"><path d="M0.5,6.5 H12.5 V15.5 H0.5 Z" fill="#9c9c9c" stroke="#6a6a6a"/><path d="M2,10 H11 M2,12 H11 M2,14 H11" stroke="#c8c8c8"/><path d="M2,0 Q7,0 7,5 H9 L6,9 L3,5 H5 Q5,2 2,2 Z" fill="#777"/></svg>
<div style="position:absolute;left:196px;top:156px;width:1px;height:14px;background:#8a9099"></div><div style="position:absolute;left:197px;top:156px;width:1px;height:14px;background:#fafafa"></div>
<svg style="position:absolute;left:203px;top:155px;overflow:visible" width="16" height="16" viewBox="0 0 16 16"><rect x="0.5" y="0.5" width="15" height="15" fill="none" stroke="#333" stroke-dasharray="2,1"/><rect x="3" y="3" width="10" height="8" fill="none" stroke="#1e8ee0" stroke-width="1.5"/><circle cx="4" cy="11" r="3" fill="#bde2f6" stroke="#1e8ee0" stroke-width="1.5"/><path d="M9,6 V15 L11,13 L13,16 L14,15 L12.5,12 H15 Z" fill="#fff" stroke="#222" stroke-width="0.8"/></svg>
<svg style="position:absolute;left:223px;top:155px;overflow:visible" width="16" height="16" viewBox="0 0 16 16"><rect x="0.5" y="0.5" width="15" height="15" fill="#dff0fa" stroke="#333" stroke-dasharray="2,1"/><path d="M2,2 L7,7 M7,2 L2,7" stroke="#1e8ee0" stroke-width="1.1"/><path d="M9,6 V15 L11,13 L13,16 L14,15 L12.5,12 H15 Z" fill="#fff" stroke="#222" stroke-width="0.8"/></svg>
<svg style="position:absolute;left:12px;top:157px;overflow:visible" width="16" height="3" viewBox="0 0 16 3"><rect x="1" y="1" width="2" height="2" fill="#fff"/><rect x="0" y="0" width="2" height="2" fill="#1c1c1c"/><rect x="5" y="1" width="2" height="2" fill="#fff"/><rect x="4" y="0" width="2" height="2" fill="#1c1c1c"/><rect x="9" y="1" width="2" height="2" fill="#fff"/><rect x="8" y="0" width="2" height="2" fill="#1c1c1c"/><rect x="13" y="1" width="2" height="2" fill="#fff"/><rect x="12" y="0" width="2" height="2" fill="#1c1c1c"/></svg>
<svg style="position:absolute;left:12px;top:165px;overflow:visible" width="16" height="16" viewBox="0 0 16 16"><path d="M2,14 L14,2" stroke="#333"/><rect x="0.5" y="12.5" width="3" height="3" fill="#fff" stroke="#1e6fe0" stroke-width="1"/><rect x="12.5" y="0.5" width="3" height="3" fill="#fff" stroke="#1e6fe0" stroke-width="1"/></svg>
<svg style="position:absolute;left:12px;top:186px;overflow:visible" width="16" height="16" viewBox="0 0 16 16"><path d="M1,15 L15,1" stroke="#555"/><path d="M1,15 L1.5,10.5 M1,15 L5.5,14.5 M15,1 L14.5,5.5 M15,1 L10.5,1.5" stroke="#555"/><rect x="6.5" y="6.5" width="3" height="3" fill="#fff" stroke="#333"/></svg>
<svg style="position:absolute;left:26px;top:198px;overflow:visible" width="4" height="4" viewBox="0 0 4 4"><path d="M0,4 L4,0 V4 Z" fill="#2b7fe8"/></svg>
<svg style="position:absolute;left:12px;top:207px;overflow:visible" width="16" height="16" viewBox="0 0 16 16"><path d="M2,15 V2 H7 Q13,2 13,6 Q13,9.5 7,9.5 V15" fill="none" stroke="#333"/><rect x="0.5" y="0.5" width="3" height="3" fill="#fff" stroke="#1e6fe0" stroke-width="1"/><rect x="5.5" y="0.5" width="3" height="3" fill="#fff" stroke="#1e6fe0" stroke-width="1"/><rect x="11.5" y="4.5" width="3" height="3" fill="#fff" stroke="#1e6fe0" stroke-width="1"/><rect x="5.5" y="8.0" width="3" height="3" fill="#fff" stroke="#1e6fe0" stroke-width="1"/><rect x="0.5" y="13.5" width="3" height="3" fill="#fff" stroke="#1e6fe0" stroke-width="1"/><rect x="5.5" y="13.5" width="3" height="3" fill="#fff" stroke="#1e6fe0" stroke-width="1"/></svg>
<svg style="position:absolute;left:12px;top:227px;overflow:visible" width="16" height="16" viewBox="0 0 16 16"><path d="M8,0.5 L15.5,6 L12.5,15.5 H3.5 L0.5,6 Z" fill="#cfe8f6" stroke="#333"/></svg>
<svg style="position:absolute;left:12px;top:249px;overflow:visible" width="16" height="16" viewBox="0 0 16 16"><rect x="1.5" y="2.5" width="13" height="10" fill="#bfe0f2" stroke="#333"/><rect x="0.5" y="1.5" width="2" height="2" fill="#fff" stroke="#333"/><rect x="13.5" y="11.5" width="2" height="2" fill="#fff" stroke="#333"/></svg>
<svg style="position:absolute;left:26px;top:261px;overflow:visible" width="4" height="4" viewBox="0 0 4 4"><path d="M0,4 L4,0 V4 Z" fill="#2b7fe8"/></svg>
<svg style="position:absolute;left:12px;top:270px;overflow:visible" width="16" height="16" viewBox="0 0 16 16"><path d="M2,15 Q3,4 14,2" fill="none" stroke="#333"/><rect x="0.5" y="13.5" width="3" height="3" fill="#fff" stroke="#1e6fe0" stroke-width="1"/><rect x="4.5" y="5.0" width="3" height="3" fill="#fff" stroke="#1e6fe0" stroke-width="1"/><rect x="12.5" y="0.5" width="3" height="3" fill="#fff" stroke="#1e6fe0" stroke-width="1"/></svg>
<svg style="position:absolute;left:26px;top:282px;overflow:visible" width="4" height="4" viewBox="0 0 4 4"><path d="M0,4 L4,0 V4 Z" fill="#2b7fe8"/></svg>
<svg style="position:absolute;left:12px;top:292px;overflow:visible" width="16" height="16" viewBox="0 0 16 16"><circle cx="8" cy="8" r="7" fill="#d8eef8" stroke="#333"/><path d="M8,8 H14" stroke="#1e8ee0" stroke-width="1.2"/><rect x="6.5" y="6.5" width="3" height="3" fill="#fff" stroke="#333"/><rect x="12.5" y="6.5" width="3" height="3" fill="#fff" stroke="#333"/></svg>
<svg style="position:absolute;left:26px;top:304px;overflow:visible" width="4" height="4" viewBox="0 0 4 4"><path d="M0,4 L4,0 V4 Z" fill="#2b7fe8"/></svg>
<svg style="position:absolute;left:12px;top:320px;overflow:visible" width="16" height="16" viewBox="0 0 16 16"><path d="M3,6 Q2,1 7,2 Q11,0 12,4 Q16,5 14,9 Q16,14 11,14 Q8,16 5,14 Q0,14 2,10 Q0,7 3,6 Z" fill="#dcdcdc" stroke="#555" stroke-width="1.2"/></svg>
<svg style="position:absolute;left:12px;top:341px;overflow:visible" width="16" height="16" viewBox="0 0 16 16"><path d="M3,14 Q6,7 8,11 Q10,15 13,2" fill="none" stroke="#333"/><rect x="1.5" y="12.5" width="3" height="3" fill="#fff" stroke="#1e6fe0" stroke-width="1"/><rect x="8.5" y="11.5" width="3" height="3" fill="#fff" stroke="#1e6fe0" stroke-width="1"/><rect x="11.5" y="0.5" width="3" height="3" fill="#fff" stroke="#1e6fe0" stroke-width="1"/></svg>
<svg style="position:absolute;left:12px;top:362px;overflow:visible" width="16" height="16" viewBox="0 0 16 16"><ellipse cx="8" cy="9" rx="7.5" ry="5.5" fill="#d8eef8" stroke="#333"/><path d="M8,9 H14" stroke="#1e8ee0" stroke-width="1.2"/><path d="M8,3 V9" stroke="#333"/><rect x="6.5" y="1.5" width="3" height="3" fill="#fff" stroke="#333"/><rect x="13.5" y="7.5" width="3" height="3" fill="#fff" stroke="#333"/></svg>
<svg style="position:absolute;left:26px;top:374px;overflow:visible" width="4" height="4" viewBox="0 0 4 4"><path d="M0,4 L4,0 V4 Z" fill="#2b7fe8"/></svg>
<svg style="position:absolute;left:12px;top:391px;overflow:visible" width="16" height="16" viewBox="0 0 16 16"><rect x="3" y="3" width="10" height="10" fill="#2b9ee6"/><path d="M3,7 L7,3 M3,11 L11,3 M5,13 L13,5 M9,13 L13,9" stroke="#fff" stroke-width="1.2"/><path d="M0,3.5 H16 M0,12.5 H16 M3.5,0 V16 M12.5,0 V16" stroke="#444"/></svg>
<svg style="position:absolute;left:26px;top:403px;overflow:visible" width="4" height="4" viewBox="0 0 4 4"><path d="M0,4 L4,0 V4 Z" fill="#2b7fe8"/></svg>
<svg style="position:absolute;left:12px;top:420px;overflow:visible" width="16" height="16" viewBox="0 0 16 16"><path d="M6,0.5 H12 L15.5,4 V15.5 H6" fill="#fff" stroke="#333"/><circle cx="4.5" cy="7" r="3.2" fill="#bfe0f2" stroke="#333"/><path d="M0.5,15.5 L4,9 L10,15.5 Z" fill="#bfe0f2" stroke="#333"/><path d="M0.5,15.5 H15.5" stroke="#333"/></svg>
<svg style="position:absolute;left:26px;top:432px;overflow:visible" width="4" height="4" viewBox="0 0 4 4"><path d="M0,4 L4,0 V4 Z" fill="#2b7fe8"/></svg>
<svg style="position:absolute;left:12px;top:442px;overflow:visible" width="16" height="16" viewBox="0 0 16 16"><circle cx="4.5" cy="5" r="3.5" fill="#bfe0f2" stroke="#333"/><path d="M1,10 V15.5 H14 V6 M1,15.5 L9,6 L15,15" fill="none" stroke="#333"/><path d="M4,15 L9,8 L13,15 Z" fill="#dceef8"/></svg>
<svg style="position:absolute;left:26px;top:454px;overflow:visible" width="4" height="4" viewBox="0 0 4 4"><path d="M0,4 L4,0 V4 Z" fill="#2b7fe8"/></svg>
<svg style="position:absolute;left:12px;top:470px;overflow:visible" width="16" height="16" viewBox="0 0 16 16"><rect x="6.5" y="6.5" width="3" height="3" fill="#fff" stroke="#333"/></svg>
<svg style="position:absolute;left:26px;top:482px;overflow:visible" width="4" height="4" viewBox="0 0 4 4"><path d="M0,4 L4,0 V4 Z" fill="#2b7fe8"/></svg>
<svg style="position:absolute;left:12px;top:499px;overflow:visible" width="16" height="16" viewBox="0 0 16 16"><rect x="3.5" y="0.5" width="12" height="11" fill="#dfe6f6" stroke="#1e5fc0"/><rect x="0.5" y="3.5" width="13" height="12" fill="#f0f4fc" stroke="#1e5fc0"/><rect x="1" y="4" width="12" height="2.5" fill="#1e6fd0"/><path d="M3,9 H11 M3,12 H11 M7,8 V14" stroke="#333" stroke-width="1.2"/></svg>
<svg style="position:absolute;left:12px;top:520px;overflow:visible" width="16" height="16" viewBox="0 0 16 16"><text x="8" y="16" text-anchor="middle" font-family="Liberation Serif" font-size="20" fill="#333">T</text></svg>
<svg style="position:absolute;left:26px;top:532px;overflow:visible" width="4" height="4" viewBox="0 0 4 4"><path d="M0,4 L4,0 V4 Z" fill="#2b7fe8"/></svg>
<div style="position:absolute;left:10px;top:314px;width:20px;height:1px;background:#f4f4f4"></div>
<div style="position:absolute;left:10px;top:313px;width:20px;height:1px;background:#9ea4ab"></div>
<div style="position:absolute;left:10px;top:385px;width:20px;height:1px;background:#f4f4f4"></div>
<div style="position:absolute;left:10px;top:384px;width:20px;height:1px;background:#9ea4ab"></div>
<div style="position:absolute;left:10px;top:414px;width:20px;height:1px;background:#f4f4f4"></div>
<div style="position:absolute;left:10px;top:413px;width:20px;height:1px;background:#9ea4ab"></div>
<div style="position:absolute;left:10px;top:464px;width:20px;height:1px;background:#f4f4f4"></div>
<div style="position:absolute;left:10px;top:463px;width:20px;height:1px;background:#9ea4ab"></div>
<div style="position:absolute;left:10px;top:493px;width:20px;height:1px;background:#f4f4f4"></div>
<div style="position:absolute;left:10px;top:492px;width:20px;height:1px;background:#9ea4ab"></div>
<svg style="position:absolute;left:820px;top:157px;overflow:visible" width="16" height="3" viewBox="0 0 16 3"><rect x="1" y="1" width="2" height="2" fill="#fff"/><rect x="0" y="0" width="2" height="2" fill="#1c1c1c"/><rect x="5" y="1" width="2" height="2" fill="#fff"/><rect x="4" y="0" width="2" height="2" fill="#1c1c1c"/><rect x="9" y="1" width="2" height="2" fill="#fff"/><rect x="8" y="0" width="2" height="2" fill="#1c1c1c"/><rect x="13" y="1" width="2" height="2" fill="#fff"/><rect x="12" y="0" width="2" height="2" fill="#1c1c1c"/></svg>
<svg style="position:absolute;left:819px;top:166px;overflow:visible" width="16" height="16" viewBox="0 0 16 16"><path d="M0,15.5 H16" stroke="#222"/><path d="M7,12 L15,2" stroke="#1e8ee0" stroke-width="4" stroke-linecap="round"/><path d="M5,13 L8,10" stroke="#e86030" stroke-width="4" stroke-linecap="round"/><path d="M9,9 L10,8" stroke="#fff" stroke-width="3"/></svg>
<svg style="position:absolute;left:819px;top:186px;overflow:visible" width="16" height="16" viewBox="0 0 16 16"><path d="M0.5,15.5 L7,9 V0.5 L0.5,7 Z" fill="#2b9ee6" stroke="#1a7ad0"/><path d="M9,15.5 L15.5,9 V0.5 L9,7 Z" fill="#808080" stroke="#333"/><path d="M2,8.5 H12" stroke="#333" stroke-width="1.5"/><path d="M10,6 L13,8.5 L10,11 Z" fill="#333"/><path d="M2,8 H11" stroke="#fff" stroke-width="0.6"/></svg>
<svg style="position:absolute;left:819px;top:207px;overflow:visible" width="16" height="16" viewBox="0 0 16 16"><path d="M0.5,8.5 L7,0.5 H15.5 L9,8.5 Z" fill="#2b9ee6" stroke="#1a7ad0"/><path d="M0.5,15.5 L15.5,3" stroke="#333" stroke-width="2.5"/><path d="M1,15 L15,3.5" stroke="#fff" stroke-width="0.8"/><path d="M6,15.5 L15.5,7 V15.5 Z" fill="#808080" stroke="#333"/></svg>
<svg style="position:absolute;left:819px;top:227px;overflow:visible" width="16" height="16" viewBox="0 0 16 16"><path d="M0,3.5 H4.5 L6,1.5 H9 L10.5,3.5 H15.5 V12.5 H10.5 L9,14.5 H6 L4.5,12.5 H0" fill="none" stroke="#333" stroke-width="1.1"/><path d="M0,5.5 H6 V3.5 H9 V5.5 H13.5 V10.5 H9 V12.5 H6 V10.5 H0" fill="none" stroke="#1ea0e8" stroke-width="1.2"/></svg>
<svg style="position:absolute;left:819px;top:249px;overflow:visible" width="16" height="16" viewBox="0 0 16 16"><rect x="1" y="1" width="3.5" height="3.5" fill="#f0f0f0" stroke="#333" stroke-width="1.2"/><rect x="1" y="7" width="3.5" height="3.5" fill="#c8c8c8" stroke="#333" stroke-width="1.2"/><rect x="1" y="13" width="3.5" height="3.5" fill="#d8eefa" stroke="#1e9ee6" stroke-width="1.2"/><rect x="7" y="1" width="3.5" height="3.5" fill="#f0f0f0" stroke="#333" stroke-width="1.2"/><rect x="7" y="7" width="3.5" height="3.5" fill="#c8c8c8" stroke="#333" stroke-width="1.2"/><rect x="7" y="13" width="3.5" height="3.5" fill="#888" stroke="#333" stroke-width="1.2"/><rect x="13" y="1" width="3.5" height="3.5" fill="#f0f0f0" stroke="#333" stroke-width="1.2"/><rect x="13" y="7" width="3.5" height="3.5" fill="#c8c8c8" stroke="#333" stroke-width="1.2"/><rect x="13" y="13" width="3.5" height="3.5" fill="#888" stroke="#333" stroke-width="1.2"/></svg>
<svg style="position:absolute;left:819px;top:278px;overflow:visible" width="16" height="16" viewBox="0 0 16 16"><path d="M8,0.5 L11,3.5 H9 V7 H12.5 V5 L15.5,8 L12.5,11 V9 H9 V12.5 H11 L8,15.5 L5,12.5 H7 V9 H3.5 V11 L0.5,8 L3.5,5 V7 H7 V3.5 H5 Z" fill="#2b9ee6" stroke="#333" stroke-width="0.6"/></svg>
<svg style="position:absolute;left:819px;top:299px;overflow:visible" width="16" height="16" viewBox="0 0 16 16"><path d="M4,4 A6.5,6.5 0 1 0 12,3.5" fill="none" stroke="#1e8ee0" stroke-width="2.2"/><path d="M4,4 A6.5,6.5 0 0 0 3,12" fill="none" stroke="#333" stroke-width="2.2"/><path d="M1,1 L7,2 L3,7 Z" fill="#333"/></svg>
<svg style="position:absolute;left:819px;top:328px;overflow:visible" width="16" height="16" viewBox="0 0 16 16"><rect x="0.5" y="0.5" width="15" height="15" fill="#f4f4f4" stroke="#333"/><rect x="0.5" y="6.5" width="9" height="9" fill="#5fb2e6" stroke="#333"/><path d="M9,7 L15,1" stroke="#777"/></svg>
<svg style="position:absolute;left:819px;top:349px;overflow:visible" width="16" height="16" viewBox="0 0 16 16"><path d="M0.5,0.5 H15.5 L12,15.5 H0.5 Z" fill="#f4f4f4" stroke="#333"/><rect x="0.5" y="0.5" width="5" height="15" fill="#5fb2e6" stroke="#333"/><path d="M6,15.5 L9,6 L12,15.5 Z" fill="#666"/><path d="M2,5 H11" stroke="#333" stroke-width="1.5"/><path d="M9,3 L12,5 L9,7 Z" fill="#333"/></svg>
<svg style="position:absolute;left:819px;top:378px;overflow:visible" width="16" height="16" viewBox="0 0 16 16"><path d="M0,8.5 H6" stroke="#222" stroke-width="1.3"/><path d="M9,8.5 H16" stroke="#1e8ee0" stroke-width="1.3" stroke-dasharray="2,1"/><path d="M4,15 L11,1" stroke="#e02020" stroke-width="1.3"/></svg>
<svg style="position:absolute;left:819px;top:400px;overflow:visible" width="16" height="16" viewBox="0 0 16 16"><path d="M0,6.5 H4" stroke="#1e8ee0" stroke-width="1.3"/><path d="M5,6.5 H10" stroke="#333" stroke-dasharray="2,1" stroke-width="1.3"/><path d="M10,14 L15,1" stroke="#e02020" stroke-width="1.3"/></svg>
<svg style="position:absolute;left:819px;top:420px;overflow:visible" width="16" height="16" viewBox="0 0 16 16"><path d="M2,4 V10 Q2,14 8,14 Q14,14 14,10 V4" fill="none" stroke="#444"/><rect x="2.5" y="2.5" width="3" height="3" fill="#fff" stroke="#1e6fe0" stroke-width="1"/><rect x="9.5" y="2.5" width="3" height="3" fill="#fff" stroke="#1e6fe0" stroke-width="1"/></svg>
<svg style="position:absolute;left:819px;top:442px;overflow:visible" width="16" height="16" viewBox="0 0 16 16"><path d="M1,4 V10 Q1,14 8,14 Q15,14 15,10 V4 H10 M6,4 H1" fill="none" stroke="#444"/><rect x="6.5" y="2.5" width="3" height="3" fill="#fff" stroke="#1e6fe0" stroke-width="1"/></svg>
<svg style="position:absolute;left:819px;top:462px;overflow:visible" width="16" height="16" viewBox="0 0 16 16"><path d="M2,0 V16 M14,0 V16" stroke="#444"/><rect x="0.5" y="3.5" width="3" height="3" fill="#fff" stroke="#1e6fe0" stroke-width="1"/><rect x="0.5" y="10.5" width="3" height="3" fill="#fff" stroke="#1e6fe0" stroke-width="1"/><path d="M3,9 H11" stroke="#1e8ee0" stroke-width="2"/><path d="M9,6 L13,9 L9,12 Z" fill="#1e8ee0"/><circle cx="14" cy="9" r="1.5" fill="#fff" stroke="#333"/></svg>
<svg style="position:absolute;left:819px;top:490px;overflow:visible" width="16" height="16" viewBox="0 0 16 16"><path d="M1,1.5 H9 L14,7 V16" fill="none" stroke="#1e5fa8" stroke-width="1.2"/><path d="M8,1.5 L14,8" stroke="#e05020" stroke-width="1.5"/><path d="M11,1 V6 M12,1 L16,1" stroke="#333" stroke-dasharray="1,1"/></svg>
<svg style="position:absolute;left:819px;top:511px;overflow:visible" width="16" height="16" viewBox="0 0 16 16"><path d="M1,1.5 H6 Q14,2 14,10 V16" fill="none" stroke="#1e5fa8" stroke-width="1.2"/><path d="M6,1.5 Q13,2 14,9" fill="none" stroke="#e05020" stroke-width="1.5"/><path d="M3,13 L9,7" stroke="#333" stroke-width="1.4"/><path d="M3,13 L4,9 L7,12 Z" fill="#1e5fa8"/></svg>
<svg style="position:absolute;left:819px;top:540px;overflow:visible" width="16" height="16" viewBox="0 0 16 16"><circle cx="7" cy="10" r="6" fill="#222"/><circle cx="5" cy="8" r="1.5" fill="#888"/><path d="M10,5 Q11,2 13,3" stroke="#555" fill="none" stroke-width="1.4"/><circle cx="13.5" cy="3" r="2.5" fill="#ffd21a"/><circle cx="13.5" cy="3" r="1" fill="#e04020"/></svg>
<svg style="position:absolute;left:819px;top:561px;overflow:visible" width="16" height="16" viewBox="0 0 16 16"><rect x="0.5" y="0.5" width="11" height="13" fill="#e8f0fc" stroke="#1e5fc0"/><rect x="1" y="1" width="10" height="3" fill="#1e6fd0"/><path d="M9,7 L11,4 L12,8 L16,8 L12,11 L14,15 L10,12 L7,15 L8,11 L4,9 Z" fill="#ffd21a"/><path d="M7,7 L10,14 M13,5 L8,12" stroke="#e02020" stroke-width="1.4"/></svg>
<div style="position:absolute;left:818px;top:271px;width:20px;height:1px;background:#f4f4f4"></div>
<div style="position:absolute;left:818px;top:270px;width:20px;height:1px;background:#9ea4ab"></div>
<div style="position:absolute;left:818px;top:321px;width:20px;height:1px;background:#f4f4f4"></div>
<div style="position:absolute;left:818px;top:320px;width:20px;height:1px;background:#9ea4ab"></div>
<div style="position:absolute;left:818px;top:371px;width:20px;height:1px;background:#f4f4f4"></div>
<div style="position:absolute;left:818px;top:370px;width:20px;height:1px;background:#9ea4ab"></div>
<div style="position:absolute;left:818px;top:484px;width:20px;height:1px;background:#f4f4f4"></div>
<div style="position:absolute;left:818px;top:483px;width:20px;height:1px;background:#9ea4ab"></div>
<div style="position:absolute;left:818px;top:533px;width:20px;height:1px;background:#f4f4f4"></div>
<div style="position:absolute;left:818px;top:532px;width:20px;height:1px;background:#9ea4ab"></div>
<svg style="position:absolute;left:820px;top:587px;overflow:visible" width="16" height="3" viewBox="0 0 16 3"><rect x="1" y="1" width="2" height="2" fill="#fff"/><rect x="0" y="0" width="2" height="2" fill="#1c1c1c"/><rect x="5" y="1" width="2" height="2" fill="#fff"/><rect x="4" y="0" width="2" height="2" fill="#1c1c1c"/><rect x="9" y="1" width="2" height="2" fill="#fff"/><rect x="8" y="0" width="2" height="2" fill="#1c1c1c"/><rect x="13" y="1" width="2" height="2" fill="#fff"/><rect x="12" y="0" width="2" height="2" fill="#1c1c1c"/></svg>
<svg style="position:absolute;left:819px;top:594px;overflow:visible" width="16" height="16" viewBox="0 0 16 16"><rect x="0.5" y="0.5" width="9" height="6" fill="#eee" stroke="#333"/><circle cx="8.5" cy="9" r="5" fill="#28b028" stroke="#1a7a1a"/><rect x="7.5" y="10.5" width="8" height="5" fill="#f4f4f4" stroke="#333"/></svg>
<svg style="position:absolute;left:819px;top:615px;overflow:visible" width="16" height="16" viewBox="0 0 16 16"><rect x="0.5" y="0.5" width="9" height="6" fill="#eee" stroke="#333"/><circle cx="6.5" cy="9" r="5" fill="#28b028" stroke="#1a7a1a"/><rect x="2.5" y="2.5" width="8" height="5" fill="#f4f4f4" stroke="#333"/><rect x="7.5" y="10.5" width="8" height="5" fill="#f4f4f4" stroke="#333"/></svg>
<svg style="position:absolute;left:819px;top:636px;overflow:visible" width="16" height="16" viewBox="0 0 16 16"><defs><radialGradient id="bg3" cx="0.4" cy="0.35" r="0.7"><stop offset="0" stop-color="#e8f6ff"/><stop offset="1" stop-color="#2b8ed8"/></radialGradient></defs><rect x="6.5" y="7.5" width="9" height="8" fill="#eee" stroke="#333"/><circle cx="7" cy="7" r="6.2" fill="url(#bg3)" stroke="#333"/></svg>
<svg style="position:absolute;left:819px;top:657px;overflow:visible" width="16" height="16" viewBox="0 0 16 16"><defs><radialGradient id="bg4" cx="0.4" cy="0.35" r="0.7"><stop offset="0" stop-color="#e8f6ff"/><stop offset="1" stop-color="#2b8ed8"/></radialGradient></defs><circle cx="7" cy="7" r="6.2" fill="url(#bg4)" stroke="#333"/><rect x="6.5" y="7.5" width="9" height="8" fill="#eee" stroke="#333"/></svg>
</body></html>
